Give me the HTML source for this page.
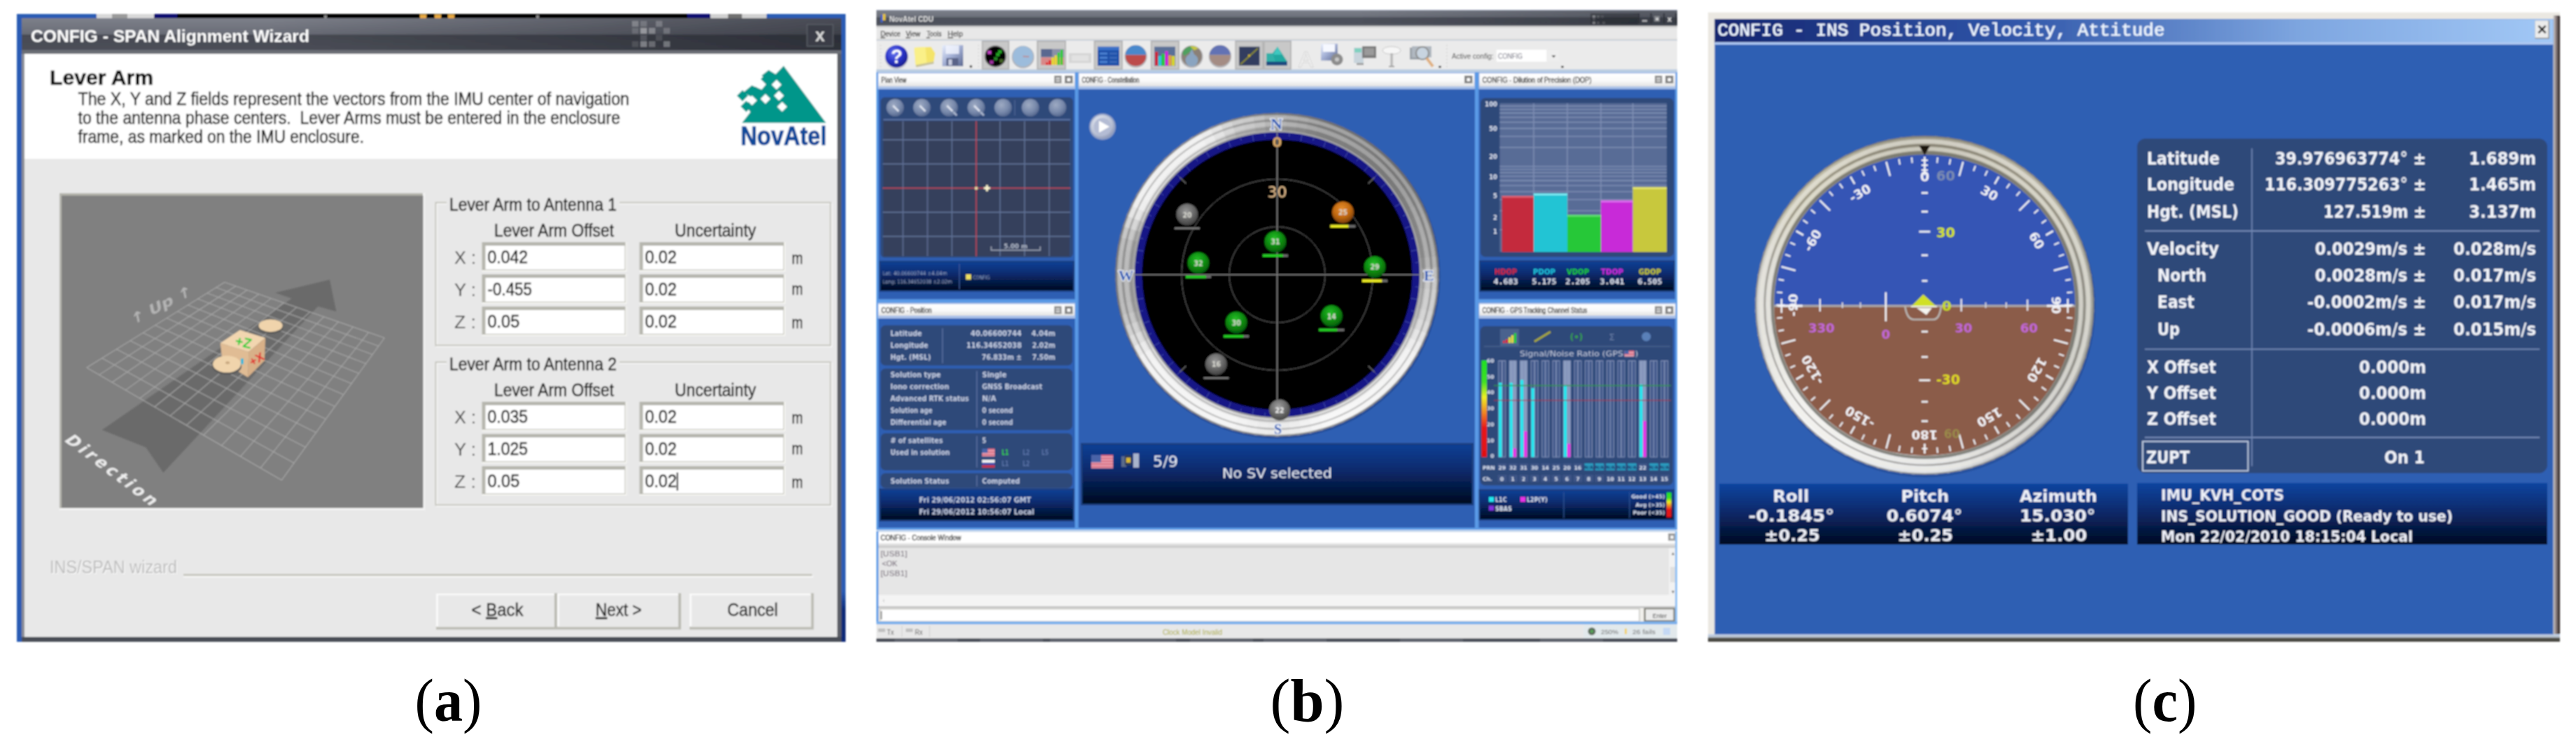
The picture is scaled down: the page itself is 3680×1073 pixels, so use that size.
<!DOCTYPE html>
<html><head><meta charset="utf-8"><title>Figure</title>
<style>html,body{margin:0;padding:0;background:#fff;}svg{display:block}</style></head>
<body><svg width="3680" height="1073" viewBox="0 0 3680 1073">
<defs><filter id="blA" x="-2%" y="-2%" width="104%" height="104%"><feGaussianBlur stdDeviation="0.9"/></filter><filter id="bl2" x="-5%" y="-5%" width="110%" height="110%"><feGaussianBlur stdDeviation="1.6"/></filter><linearGradient id="aRB" x1="0" y1="0" x2="0" y2="1"><stop offset="0" stop-color="#2a5cb4"/><stop offset="0.92" stop-color="#2a5cb4"/><stop offset="0.95" stop-color="#0a2a78"/><stop offset="1" stop-color="#0a2a78"/></linearGradient><linearGradient id="aT1" x1="0" y1="0" x2="0" y2="1"><stop offset="0" stop-color="#7d808a"/><stop offset="0.45" stop-color="#696c76"/><stop offset="0.47" stop-color="#474a53"/><stop offset="0.88" stop-color="#4c4f58"/><stop offset="0.9" stop-color="#6a6d75"/><stop offset="1" stop-color="#6a6d75"/></linearGradient><linearGradient id="aT3" x1="0" y1="0" x2="1" y2="0"><stop offset="0.3" stop-color="#0a0c14" stop-opacity="0"/><stop offset="1" stop-color="#0a0c14" stop-opacity="0.45"/></linearGradient><filter id="blB" x="-2%" y="-2%" width="104%" height="104%"><feGaussianBlur stdDeviation="1.3"/></filter><filter id="blB2" x="-5%" y="-5%" width="110%" height="110%"><feGaussianBlur stdDeviation="0.7"/></filter><linearGradient id="bT" x1="0" y1="0" x2="0" y2="1"><stop offset="0" stop-color="#7c808a"/><stop offset="0.42" stop-color="#6c707a"/><stop offset="0.46" stop-color="#4e525c"/><stop offset="0.85" stop-color="#4c505a"/><stop offset="0.9" stop-color="#5c606a"/><stop offset="1" stop-color="#5c606a"/></linearGradient><linearGradient id="bT2" x1="0" y1="0" x2="1" y2="0"><stop offset="0.6" stop-color="#0a0c14" stop-opacity="0"/><stop offset="0.95" stop-color="#0a0c14" stop-opacity="0.28"/></linearGradient><radialGradient id="bHelp" cx="0.4" cy="0.35" r="0.65"><stop offset="0" stop-color="#6a78f0"/><stop offset="0.6" stop-color="#2a34c8"/><stop offset="1" stop-color="#1a2090"/></radialGradient><linearGradient id="bFl" x1="0" y1="0" x2="1" y2="1"><stop offset="0" stop-color="#e8eefc"/><stop offset="0.45" stop-color="#a8b4d8"/><stop offset="1" stop-color="#5a6890"/></linearGradient><linearGradient id="bH" x1="0" y1="0" x2="0" y2="1"><stop offset="0" stop-color="#ffffff"/><stop offset="0.55" stop-color="#fafafa"/><stop offset="1" stop-color="#e2e2e2"/></linearGradient><linearGradient id="bStrip" x1="0" y1="0" x2="0" y2="1"><stop offset="0" stop-color="#0e3f94"/><stop offset="0.4" stop-color="#0a2c70"/><stop offset="1" stop-color="#010a20"/></linearGradient><radialGradient id="bBall" cx="0.4" cy="0.35" r="0.7"><stop offset="0" stop-color="#e8ecf4"/><stop offset="0.6" stop-color="#a8b4cc"/><stop offset="1" stop-color="#6a7898"/></radialGradient><radialGradient id="bPlay" cx="0.4" cy="0.35" r="0.7"><stop offset="0" stop-color="#f0f2f8"/><stop offset="0.7" stop-color="#b8c0d4"/><stop offset="1" stop-color="#8a94b4"/></radialGradient><linearGradient id="bBez" x1="0.15" y1="0.1" x2="0.85" y2="0.9"><stop offset="0" stop-color="#8a8a8a"/><stop offset="0.15" stop-color="#d8d8d8"/><stop offset="0.3" stop-color="#a8a8a8"/><stop offset="0.5" stop-color="#dcdcdc"/><stop offset="0.7" stop-color="#f4f4f4"/><stop offset="0.9" stop-color="#fafafa"/><stop offset="1" stop-color="#c8c8c8"/></linearGradient><radialGradient id="bs20" cx="0.45" cy="0.35" r="0.7"><stop offset="0" stop-color="#989898"/><stop offset="0.55" stop-color="#666"/><stop offset="1" stop-color="#383838"/></radialGradient><radialGradient id="bs25" cx="0.45" cy="0.35" r="0.7"><stop offset="0" stop-color="#e89030"/><stop offset="0.55" stop-color="#c06810"/><stop offset="1" stop-color="#703804"/></radialGradient><radialGradient id="bs31" cx="0.45" cy="0.35" r="0.7"><stop offset="0" stop-color="#28c028"/><stop offset="0.55" stop-color="#0a8a10"/><stop offset="1" stop-color="#045008"/></radialGradient><radialGradient id="bs32" cx="0.45" cy="0.35" r="0.7"><stop offset="0" stop-color="#28c028"/><stop offset="0.55" stop-color="#0a8a10"/><stop offset="1" stop-color="#045008"/></radialGradient><radialGradient id="bs29" cx="0.45" cy="0.35" r="0.7"><stop offset="0" stop-color="#28c028"/><stop offset="0.55" stop-color="#0a8a10"/><stop offset="1" stop-color="#045008"/></radialGradient><radialGradient id="bs30" cx="0.45" cy="0.35" r="0.7"><stop offset="0" stop-color="#28c028"/><stop offset="0.55" stop-color="#0a8a10"/><stop offset="1" stop-color="#045008"/></radialGradient><radialGradient id="bs14" cx="0.45" cy="0.35" r="0.7"><stop offset="0" stop-color="#28c028"/><stop offset="0.55" stop-color="#0a8a10"/><stop offset="1" stop-color="#045008"/></radialGradient><radialGradient id="bs16" cx="0.45" cy="0.35" r="0.7"><stop offset="0" stop-color="#989898"/><stop offset="0.55" stop-color="#666"/><stop offset="1" stop-color="#383838"/></radialGradient><radialGradient id="bs22" cx="0.45" cy="0.35" r="0.7"><stop offset="0" stop-color="#a0a0a0"/><stop offset="0.55" stop-color="#6a6a6a"/><stop offset="1" stop-color="#3c3c3c"/></radialGradient><linearGradient id="bSc" x1="0" y1="0" x2="0" y2="1"><stop offset="0" stop-color="#20e020"/><stop offset="0.22" stop-color="#40e020"/><stop offset="0.38" stop-color="#f0f020"/><stop offset="0.55" stop-color="#f08020"/><stop offset="0.7" stop-color="#e81818"/><stop offset="1" stop-color="#e01010"/></linearGradient><filter id="blC" x="-2%" y="-2%" width="104%" height="104%"><feGaussianBlur stdDeviation="0.9"/></filter><linearGradient id="cRB" x1="0" y1="0" x2="1" y2="0"><stop offset="0" stop-color="#cfcfcf"/><stop offset="0.45" stop-color="#8a7c7c"/><stop offset="1" stop-color="#1c1616"/></linearGradient><linearGradient id="cBB" x1="0" y1="0" x2="0" y2="1"><stop offset="0" stop-color="#c8d8f0"/><stop offset="0.45" stop-color="#b0b8c0"/><stop offset="0.5" stop-color="#5a5a54"/><stop offset="1" stop-color="#3a3a36"/></linearGradient><linearGradient id="cT" x1="0" y1="0" x2="1" y2="0"><stop offset="0" stop-color="#14256f"/><stop offset="0.35" stop-color="#2f55a8"/><stop offset="0.7" stop-color="#7ea6e0"/><stop offset="1" stop-color="#a2c8f6"/></linearGradient><linearGradient id="cBez" x1="0.3" y1="0" x2="0.6" y2="1"><stop offset="0" stop-color="#a8a494"/><stop offset="0.25" stop-color="#cfcab8"/><stop offset="0.5" stop-color="#c4c2b8"/><stop offset="0.75" stop-color="#eceef2"/><stop offset="1" stop-color="#d0d4dc"/></linearGradient><linearGradient id="cStrip" x1="0" y1="0" x2="0" y2="1"><stop offset="0" stop-color="#1145a0"/><stop offset="0.35" stop-color="#0c3078"/><stop offset="1" stop-color="#020a22"/></linearGradient></defs>
<g id="panelA" filter="url(#blA)">
<rect x="24.0" y="20.0" width="1184.0" height="897.0" fill="#2a5cb4" />
<rect x="1202.0" y="20.0" width="6.0" height="897.0" fill="url(#aRB)" />
<rect x="138.0" y="20.0" width="82.0" height="6.0" fill="#d8d8d8" />
<rect x="160.0" y="20.0" width="22.0" height="6.0" fill="#9a9a9a" />
<rect x="220.0" y="20.0" width="33.0" height="6.0" fill="#101070" />
<rect x="253.0" y="20.0" width="729.0" height="6.0" fill="#000" />
<rect x="982.0" y="20.0" width="33.0" height="6.0" fill="#101070" />
<rect x="1015.0" y="20.0" width="80.0" height="6.0" fill="#d0d0d0" />
<rect x="1040.0" y="20.0" width="20.0" height="6.0" fill="#707070" />
<rect x="600.0" y="21.0" width="9.0" height="5.0" fill="#e8a840" />
<rect x="621.0" y="21.0" width="9.0" height="5.0" fill="#e8a840" />
<rect x="640.0" y="21.0" width="9.0" height="5.0" fill="#e8a840" />
<rect x="463.0" y="22.0" width="4.0" height="4.0" fill="#888" />
<rect x="766.0" y="22.0" width="4.0" height="4.0" fill="#888" />
<rect x="31.0" y="26.0" width="1171.0" height="51.0" fill="url(#aT1)" />
<rect x="31.0" y="26.0" width="1171.0" height="46.0" fill="url(#aT3)" />
<rect x="903.0" y="30.0" width="9.0" height="8.0" fill="#fff" opacity="0.25"/>
<rect x="915.0" y="30.0" width="9.0" height="8.0" fill="#fff" opacity="0.18"/>
<rect x="937.0" y="30.0" width="9.0" height="8.0" fill="#fff" opacity="0.22"/>
<rect x="903.0" y="40.0" width="9.0" height="8.0" fill="#fff" opacity="0.15"/>
<rect x="915.0" y="40.0" width="9.0" height="8.0" fill="#fff" opacity="0.4"/>
<rect x="927.0" y="40.0" width="9.0" height="8.0" fill="#fff" opacity="0.3"/>
<rect x="948.0" y="40.0" width="9.0" height="8.0" fill="#fff" opacity="0.2"/>
<rect x="915.0" y="50.0" width="9.0" height="8.0" fill="#fff" opacity="0.15"/>
<rect x="937.0" y="50.0" width="9.0" height="8.0" fill="#fff" opacity="0.12"/>
<rect x="903.0" y="59.0" width="9.0" height="8.0" fill="#fff" opacity="0.12"/>
<rect x="915.0" y="59.0" width="9.0" height="8.0" fill="#fff" opacity="0.35"/>
<rect x="927.0" y="59.0" width="9.0" height="8.0" fill="#fff" opacity="0.25"/>
<rect x="948.0" y="59.0" width="9.0" height="8.0" fill="#fff" opacity="0.3"/>
<rect x="1153.0" y="35.0" width="37.0" height="31.0" fill="#3a3d46" stroke="#5a5d66" stroke-width="1.5"/>
<text x="1171.5" y="58.5" font-size="25" fill="#d8d8d8" font-family='"Liberation Sans", Arial, sans-serif' font-weight="bold" text-anchor="middle" >x</text>
<text x="44.0" y="60.0" font-size="23.5" fill="#fff" font-family='"Liberation Sans", Arial, sans-serif' font-weight="bold" text-anchor="start" textLength="398.0" lengthAdjust="spacingAndGlyphs" >CONFIG - SPAN Alignment Wizard</text>
<rect x="31.0" y="77.0" width="4.0" height="835.0" fill="#8a8d95" />
<rect x="1196.0" y="77.0" width="6.0" height="835.0" fill="#5a5d66" />
<rect x="31.0" y="910.0" width="1171.0" height="7.0" fill="#4a4d56" />
<rect x="35.0" y="77.0" width="1161.0" height="150.0" fill="#fff" />
<rect x="35.0" y="227.0" width="1161.0" height="683.0" fill="#e8e8e8" />
<text x="71.0" y="121.0" font-size="29.5" fill="#000" font-family='"Liberation Sans", Arial, sans-serif' font-weight="bold" text-anchor="start" textLength="148.0" lengthAdjust="spacingAndGlyphs" stroke="#000" stroke-width="0.5">Lever Arm</text>
<text x="111.5" y="149.5" font-size="25" fill="#1a1a1a" font-family='"Liberation Sans", Arial, sans-serif' font-weight="normal" text-anchor="start" textLength="787.5" lengthAdjust="spacingAndGlyphs"  stroke="#222" stroke-width="0.55">The X, Y and Z fields represent the vectors from the IMU center of navigation</text>
<text x="111.5" y="176.5" font-size="25" fill="#1a1a1a" font-family='"Liberation Sans", Arial, sans-serif' font-weight="normal" text-anchor="start" textLength="774.5" lengthAdjust="spacingAndGlyphs" style="white-space:pre" stroke="#222" stroke-width="0.55">to the antenna phase centers.  Lever Arms must be entered in the enclosure</text>
<text x="111.5" y="203.5" font-size="25" fill="#1a1a1a" font-family='"Liberation Sans", Arial, sans-serif' font-weight="normal" text-anchor="start" textLength="408.5" lengthAdjust="spacingAndGlyphs"  stroke="#222" stroke-width="0.55">frame, as marked on the IMU enclosure.</text>
<polygon points="1119.5,94 1180,175.5 1060,175.5 1072,160 1064,150 1076,140 1062,132 1074,122 1088,128 1098,116 1088,108 1098,100 1108,106" fill="#00968a"/>
<polygon points="1094.7,105 1102.7,113 1094.7,121 1086.7,113" fill="#00968a"/>
<polygon points="1080,124 1088,132 1080,140 1072,132" fill="#00968a"/>
<polygon points="1060.7,128.7 1068.7,136.7 1060.7,144.7 1052.7,136.7" fill="#00968a"/>
<polygon points="1100.3,122 1108.3,130 1100.3,138 1092.3,130" fill="#00968a"/>
<polygon points="1066,144 1074,152 1066,160 1058,152" fill="#00968a"/>
<polygon points="1109.4,114 1116.4,121 1109.4,128 1102.4,121" fill="#fff"/>
<polygon points="1112.8,129.7 1119.8,136.7 1112.8,143.7 1105.8,136.7" fill="#fff"/>
<polygon points="1093.5,134.3 1100.5,141.3 1093.5,148.3 1086.5,141.3" fill="#fff"/>
<polygon points="1074.3,136.5 1081.3,143.5 1074.3,150.5 1067.3,143.5" fill="#fff"/>
<polygon points="1117.3,145.6 1124.3,152.6 1117.3,159.6 1110.3,152.6" fill="#fff"/>
<text x="1058.0" y="207.0" font-size="37" fill="#10489a" font-family='"Liberation Sans", Arial, sans-serif' font-weight="bold" text-anchor="start" textLength="123.0" lengthAdjust="spacingAndGlyphs" stroke="#10489a" stroke-width="0.9">NovAtel</text>
<rect x="85.0" y="276.0" width="522.0" height="453.0" fill="#f4f4f4" />
<rect x="85.0" y="276.0" width="519.0" height="450.0" fill="#b4b4ac" />
<rect x="88.0" y="279.5" width="516.5" height="446.0" fill="#808080" />
<clipPath id="c3d"><rect x="88" y="279.5" width="516.5" height="446"/></clipPath>
<g clip-path="url(#c3d)">
<polygon points="471.1,399.5 480.5,445.2 454.2,437.7 233.3,675.5 208.3,639.2 145.7,614.2 416.7,426.4 392.9,418.3" fill="#6a6a6a"/>
<line x1="123.8" y1="525.3" x2="402.3" y2="686.1" stroke="#a8a8a8" stroke-width="1.1" />
<line x1="123.8" y1="525.3" x2="320.9" y2="403.3" stroke="#a8a8a8" stroke-width="1.1" />
<line x1="145.8" y1="511.7" x2="420.0" y2="661.6" stroke="#a8a8a8" stroke-width="1.1" />
<line x1="141.6" y1="535.6" x2="336.7" y2="408.8" stroke="#a8a8a8" stroke-width="1.1" />
<line x1="166.5" y1="498.9" x2="436.4" y2="639.0" stroke="#a8a8a8" stroke-width="1.1" />
<line x1="160.1" y1="546.3" x2="353.0" y2="414.5" stroke="#a8a8a8" stroke-width="1.1" />
<line x1="185.9" y1="486.8" x2="451.5" y2="618.1" stroke="#a8a8a8" stroke-width="1.1" />
<line x1="179.4" y1="557.4" x2="369.8" y2="420.3" stroke="#a8a8a8" stroke-width="1.1" />
<line x1="204.3" y1="475.5" x2="465.5" y2="598.7" stroke="#a8a8a8" stroke-width="1.1" />
<line x1="199.7" y1="569.1" x2="387.2" y2="426.4" stroke="#a8a8a8" stroke-width="1.1" />
<line x1="221.7" y1="464.7" x2="478.5" y2="580.7" stroke="#a8a8a8" stroke-width="1.1" />
<line x1="220.9" y1="581.3" x2="405.2" y2="432.6" stroke="#a8a8a8" stroke-width="1.1" />
<line x1="238.1" y1="454.5" x2="490.7" y2="563.8" stroke="#a8a8a8" stroke-width="1.1" />
<line x1="243.1" y1="594.2" x2="423.7" y2="439.1" stroke="#a8a8a8" stroke-width="1.1" />
<line x1="253.7" y1="444.9" x2="502.1" y2="548.1" stroke="#a8a8a8" stroke-width="1.1" />
<line x1="266.4" y1="607.6" x2="442.8" y2="445.7" stroke="#a8a8a8" stroke-width="1.1" />
<line x1="268.5" y1="435.7" x2="512.7" y2="533.4" stroke="#a8a8a8" stroke-width="1.1" />
<line x1="290.8" y1="621.7" x2="462.7" y2="452.6" stroke="#a8a8a8" stroke-width="1.1" />
<line x1="282.6" y1="427.0" x2="522.7" y2="519.6" stroke="#a8a8a8" stroke-width="1.1" />
<line x1="316.5" y1="636.6" x2="483.2" y2="459.8" stroke="#a8a8a8" stroke-width="1.1" />
<line x1="296.0" y1="418.7" x2="532.1" y2="506.6" stroke="#a8a8a8" stroke-width="1.1" />
<line x1="343.6" y1="652.2" x2="504.4" y2="467.2" stroke="#a8a8a8" stroke-width="1.1" />
<line x1="308.7" y1="410.8" x2="540.9" y2="494.4" stroke="#a8a8a8" stroke-width="1.1" />
<line x1="372.2" y1="668.7" x2="526.5" y2="474.9" stroke="#a8a8a8" stroke-width="1.1" />
<line x1="320.9" y1="403.3" x2="549.3" y2="482.8" stroke="#a8a8a8" stroke-width="1.1" />
<line x1="402.3" y1="686.1" x2="549.3" y2="482.8" stroke="#a8a8a8" stroke-width="1.1" />
<ellipse cx="386.6" cy="468.2" rx="18" ry="9" fill="#5a5a5a" />
<ellipse cx="386.6" cy="465.2" rx="17" ry="9" fill="#f0d4ac" />
<polygon points="314.7,490.3 342.8,471.5 379.1,482.8 355.3,502.8" fill="#f2d6b0"/>
<polygon points="314.7,490.3 355.3,502.8 354.1,539.1 317.8,517.2" fill="#e0bc94"/>
<polygon points="355.3,502.8 379.1,482.8 377.9,515.3 354.1,539.1" fill="#d8b088"/>
<text x="347.8" y="496.0" font-size="20" fill="#22cc33" font-family='"Liberation Sans", Arial, sans-serif' font-weight="bold" text-anchor="middle" transform="rotate(12 348 489)">+Z</text>
<text x="366.6" y="518.8" font-size="17" fill="#e02a2a" font-family='"Liberation Sans", Arial, sans-serif' font-weight="bold" text-anchor="middle" transform="rotate(-30 367 513)">+X</text>
<rect x="344.0" y="512.3" width="4.0" height="8.0" fill="#30b8d8" />
<ellipse cx="324.1" cy="523.3" rx="21" ry="12" fill="#5a5a5a" />
<ellipse cx="324.1" cy="520.3" rx="20" ry="12" fill="#f0d4ac" />
<ellipse cx="325.1" cy="518.3" rx="3" ry="2" fill="#c8a880" />
<g transform="translate(230.2,435.8) rotate(-27) skewX(-15)">
<text x="0.0" y="7.0" font-size="20" fill="#b4b4b4" font-family='"DejaVu Sans", "Liberation Sans", sans-serif' font-weight="bold" text-anchor="middle" textLength="96.0" lengthAdjust="spacingAndGlyphs" >↑  Up  ↑</text>
</g>
<g transform="translate(90.6,629.2) rotate(37) skewX(-20)">
<text x="0" y="0" font-size="23" fill="#ececec" font-family='"DejaVu Sans", "Liberation Sans", sans-serif' font-weight="bold" textLength="156" lengthAdjust="spacing">Direction</text>
</g>
</g>
<rect x="622.5" y="289.5" width="564" height="204" fill="none" stroke="#fbfbfb" stroke-width="2" transform="translate(1.5,1.5)"/>
<rect x="622.5" y="289.5" width="564" height="204" fill="none" stroke="#c4c4bc" stroke-width="2"/>
<rect x="638.0" y="281.5" width="247.0" height="18.0" fill="#e8e8e8" />
<text x="642.0" y="300.5" font-size="25" fill="#222" font-family='"Liberation Sans", Arial, sans-serif' font-weight="normal" text-anchor="start" textLength="239.0" lengthAdjust="spacingAndGlyphs"  stroke="#222" stroke-width="0.55">Lever Arm to Antenna 1</text>
<text x="706.0" y="338.1" font-size="25" fill="#222" font-family='"Liberation Sans", Arial, sans-serif' font-weight="normal" text-anchor="start" textLength="171.0" lengthAdjust="spacingAndGlyphs"  stroke="#222" stroke-width="0.55">Lever Arm Offset</text>
<text x="964.0" y="338.1" font-size="25" fill="#222" font-family='"Liberation Sans", Arial, sans-serif' font-weight="normal" text-anchor="start" textLength="116.0" lengthAdjust="spacingAndGlyphs"  stroke="#222" stroke-width="0.55">Uncertainty</text>
<text x="649.0" y="377.0" font-size="25" fill="#444" font-family='"Liberation Sans", Arial, sans-serif' font-weight="normal" text-anchor="start" textLength="31.0" lengthAdjust="spacingAndGlyphs" >X :</text>
<rect x="688.5" y="346.0" width="207.0" height="42.0" fill="#f6f6f2" />
<rect x="688.5" y="346.0" width="205.0" height="40.0" fill="#b6b6ae" />
<rect x="693.5" y="351.0" width="199.0" height="34.0" fill="#fff" />
<text x="696.5" y="376.0" font-size="25" fill="#111" font-family='"Liberation Sans", Arial, sans-serif' font-weight="normal" text-anchor="start" textLength="57.5" lengthAdjust="spacingAndGlyphs"  stroke="#222" stroke-width="0.55">0.042</text>
<rect x="913.5" y="346.0" width="208.5" height="42.0" fill="#f6f6f2" />
<rect x="913.5" y="346.0" width="206.5" height="40.0" fill="#b6b6ae" />
<rect x="918.5" y="351.0" width="200.5" height="34.0" fill="#fff" />
<text x="921.5" y="376.0" font-size="25" fill="#111" font-family='"Liberation Sans", Arial, sans-serif' font-weight="normal" text-anchor="start" textLength="45.2" lengthAdjust="spacingAndGlyphs"  stroke="#222" stroke-width="0.55">0.02</text>
<text x="1131.0" y="377.0" font-size="23" fill="#222" font-family='"Liberation Sans", Arial, sans-serif' font-weight="normal" text-anchor="start" textLength="16.0" lengthAdjust="spacingAndGlyphs"  stroke="#222" stroke-width="0.55">m</text>
<text x="649.0" y="423.0" font-size="25" fill="#444" font-family='"Liberation Sans", Arial, sans-serif' font-weight="normal" text-anchor="start" textLength="31.0" lengthAdjust="spacingAndGlyphs" >Y :</text>
<rect x="688.5" y="392.0" width="207.0" height="42.0" fill="#f6f6f2" />
<rect x="688.5" y="392.0" width="205.0" height="40.0" fill="#b6b6ae" />
<rect x="693.5" y="397.0" width="199.0" height="34.0" fill="#fff" />
<text x="696.5" y="422.0" font-size="25" fill="#111" font-family='"Liberation Sans", Arial, sans-serif' font-weight="normal" text-anchor="start" textLength="63.5" lengthAdjust="spacingAndGlyphs"  stroke="#222" stroke-width="0.55">-0.455</text>
<rect x="913.5" y="392.0" width="208.5" height="42.0" fill="#f6f6f2" />
<rect x="913.5" y="392.0" width="206.5" height="40.0" fill="#b6b6ae" />
<rect x="918.5" y="397.0" width="200.5" height="34.0" fill="#fff" />
<text x="921.5" y="422.0" font-size="25" fill="#111" font-family='"Liberation Sans", Arial, sans-serif' font-weight="normal" text-anchor="start" textLength="45.2" lengthAdjust="spacingAndGlyphs"  stroke="#222" stroke-width="0.55">0.02</text>
<text x="1131.0" y="421.0" font-size="23" fill="#222" font-family='"Liberation Sans", Arial, sans-serif' font-weight="normal" text-anchor="start" textLength="16.0" lengthAdjust="spacingAndGlyphs"  stroke="#222" stroke-width="0.55">m</text>
<text x="649.0" y="469.0" font-size="25" fill="#444" font-family='"Liberation Sans", Arial, sans-serif' font-weight="normal" text-anchor="start" textLength="31.0" lengthAdjust="spacingAndGlyphs" >Z :</text>
<rect x="688.5" y="438.0" width="207.0" height="42.0" fill="#f6f6f2" />
<rect x="688.5" y="438.0" width="205.0" height="40.0" fill="#b6b6ae" />
<rect x="693.5" y="443.0" width="199.0" height="34.0" fill="#fff" />
<text x="696.5" y="468.0" font-size="25" fill="#111" font-family='"Liberation Sans", Arial, sans-serif' font-weight="normal" text-anchor="start" textLength="45.7" lengthAdjust="spacingAndGlyphs"  stroke="#222" stroke-width="0.55">0.05</text>
<rect x="913.5" y="438.0" width="208.5" height="42.0" fill="#f6f6f2" />
<rect x="913.5" y="438.0" width="206.5" height="40.0" fill="#b6b6ae" />
<rect x="918.5" y="443.0" width="200.5" height="34.0" fill="#fff" />
<text x="921.5" y="468.0" font-size="25" fill="#111" font-family='"Liberation Sans", Arial, sans-serif' font-weight="normal" text-anchor="start" textLength="45.2" lengthAdjust="spacingAndGlyphs"  stroke="#222" stroke-width="0.55">0.02</text>
<text x="1131.0" y="469.0" font-size="23" fill="#222" font-family='"Liberation Sans", Arial, sans-serif' font-weight="normal" text-anchor="start" textLength="16.0" lengthAdjust="spacingAndGlyphs"  stroke="#222" stroke-width="0.55">m</text>
<rect x="622.5" y="517.5" width="564" height="204" fill="none" stroke="#fbfbfb" stroke-width="2" transform="translate(1.5,1.5)"/>
<rect x="622.5" y="517.5" width="564" height="204" fill="none" stroke="#c4c4bc" stroke-width="2"/>
<rect x="638.0" y="509.5" width="247.0" height="18.0" fill="#e8e8e8" />
<text x="642.0" y="528.5" font-size="25" fill="#222" font-family='"Liberation Sans", Arial, sans-serif' font-weight="normal" text-anchor="start" textLength="239.0" lengthAdjust="spacingAndGlyphs"  stroke="#222" stroke-width="0.55">Lever Arm to Antenna 2</text>
<text x="706.0" y="566.1" font-size="25" fill="#222" font-family='"Liberation Sans", Arial, sans-serif' font-weight="normal" text-anchor="start" textLength="171.0" lengthAdjust="spacingAndGlyphs"  stroke="#222" stroke-width="0.55">Lever Arm Offset</text>
<text x="964.0" y="566.1" font-size="25" fill="#222" font-family='"Liberation Sans", Arial, sans-serif' font-weight="normal" text-anchor="start" textLength="116.0" lengthAdjust="spacingAndGlyphs"  stroke="#222" stroke-width="0.55">Uncertainty</text>
<text x="649.0" y="605.0" font-size="25" fill="#444" font-family='"Liberation Sans", Arial, sans-serif' font-weight="normal" text-anchor="start" textLength="31.0" lengthAdjust="spacingAndGlyphs" >X :</text>
<rect x="688.5" y="574.0" width="207.0" height="42.0" fill="#f6f6f2" />
<rect x="688.5" y="574.0" width="205.0" height="40.0" fill="#b6b6ae" />
<rect x="693.5" y="579.0" width="199.0" height="34.0" fill="#fff" />
<text x="696.5" y="604.0" font-size="25" fill="#111" font-family='"Liberation Sans", Arial, sans-serif' font-weight="normal" text-anchor="start" textLength="57.5" lengthAdjust="spacingAndGlyphs"  stroke="#222" stroke-width="0.55">0.035</text>
<rect x="913.5" y="574.0" width="208.5" height="42.0" fill="#f6f6f2" />
<rect x="913.5" y="574.0" width="206.5" height="40.0" fill="#b6b6ae" />
<rect x="918.5" y="579.0" width="200.5" height="34.0" fill="#fff" />
<text x="921.5" y="604.0" font-size="25" fill="#111" font-family='"Liberation Sans", Arial, sans-serif' font-weight="normal" text-anchor="start" textLength="45.2" lengthAdjust="spacingAndGlyphs"  stroke="#222" stroke-width="0.55">0.02</text>
<text x="1131.0" y="605.0" font-size="23" fill="#222" font-family='"Liberation Sans", Arial, sans-serif' font-weight="normal" text-anchor="start" textLength="16.0" lengthAdjust="spacingAndGlyphs"  stroke="#222" stroke-width="0.55">m</text>
<text x="649.0" y="651.0" font-size="25" fill="#444" font-family='"Liberation Sans", Arial, sans-serif' font-weight="normal" text-anchor="start" textLength="31.0" lengthAdjust="spacingAndGlyphs" >Y :</text>
<rect x="688.5" y="620.0" width="207.0" height="42.0" fill="#f6f6f2" />
<rect x="688.5" y="620.0" width="205.0" height="40.0" fill="#b6b6ae" />
<rect x="693.5" y="625.0" width="199.0" height="34.0" fill="#fff" />
<text x="696.5" y="650.0" font-size="25" fill="#111" font-family='"Liberation Sans", Arial, sans-serif' font-weight="normal" text-anchor="start" textLength="57.5" lengthAdjust="spacingAndGlyphs"  stroke="#222" stroke-width="0.55">1.025</text>
<rect x="913.5" y="620.0" width="208.5" height="42.0" fill="#f6f6f2" />
<rect x="913.5" y="620.0" width="206.5" height="40.0" fill="#b6b6ae" />
<rect x="918.5" y="625.0" width="200.5" height="34.0" fill="#fff" />
<text x="921.5" y="650.0" font-size="25" fill="#111" font-family='"Liberation Sans", Arial, sans-serif' font-weight="normal" text-anchor="start" textLength="45.2" lengthAdjust="spacingAndGlyphs"  stroke="#222" stroke-width="0.55">0.02</text>
<text x="1131.0" y="649.0" font-size="23" fill="#222" font-family='"Liberation Sans", Arial, sans-serif' font-weight="normal" text-anchor="start" textLength="16.0" lengthAdjust="spacingAndGlyphs"  stroke="#222" stroke-width="0.55">m</text>
<text x="649.0" y="697.0" font-size="25" fill="#444" font-family='"Liberation Sans", Arial, sans-serif' font-weight="normal" text-anchor="start" textLength="31.0" lengthAdjust="spacingAndGlyphs" >Z :</text>
<rect x="688.5" y="666.0" width="207.0" height="42.0" fill="#f6f6f2" />
<rect x="688.5" y="666.0" width="205.0" height="40.0" fill="#b6b6ae" />
<rect x="693.5" y="671.0" width="199.0" height="34.0" fill="#fff" />
<text x="696.5" y="696.0" font-size="25" fill="#111" font-family='"Liberation Sans", Arial, sans-serif' font-weight="normal" text-anchor="start" textLength="45.7" lengthAdjust="spacingAndGlyphs"  stroke="#222" stroke-width="0.55">0.05</text>
<rect x="913.5" y="666.0" width="208.5" height="42.0" fill="#f6f6f2" />
<rect x="913.5" y="666.0" width="206.5" height="40.0" fill="#b6b6ae" />
<rect x="918.5" y="671.0" width="200.5" height="34.0" fill="#fff" />
<text x="921.5" y="696.0" font-size="25" fill="#111" font-family='"Liberation Sans", Arial, sans-serif' font-weight="normal" text-anchor="start" textLength="45.2" lengthAdjust="spacingAndGlyphs"  stroke="#222" stroke-width="0.55">0.02</text>
<rect x="966.7" y="675.0" width="2.0" height="26.0" fill="#000" />
<text x="1131.0" y="697.0" font-size="23" fill="#222" font-family='"Liberation Sans", Arial, sans-serif' font-weight="normal" text-anchor="start" textLength="16.0" lengthAdjust="spacingAndGlyphs"  stroke="#222" stroke-width="0.55">m</text>
<text x="72.0" y="820.0" font-size="25" fill="#fff" font-family='"Liberation Sans", Arial, sans-serif' font-weight="normal" text-anchor="start" textLength="182.0" lengthAdjust="spacingAndGlyphs" >INS/SPAN wizard</text>
<text x="71.0" y="819.0" font-size="25" fill="#bcbcbc" font-family='"Liberation Sans", Arial, sans-serif' font-weight="normal" text-anchor="start" textLength="182.0" lengthAdjust="spacingAndGlyphs" >INS/SPAN wizard</text>
<rect x="262.0" y="820.0" width="898.0" height="3.0" fill="#c6c6be" />
<rect x="262.0" y="823.0" width="900.0" height="2.0" fill="#f8f8f8" />
<rect x="623.0" y="847.5" width="173.0" height="52.0" fill="#bcbcb4" />
<rect x="623.0" y="847.5" width="169.0" height="48.0" fill="#fafafa" />
<rect x="626.0" y="850.5" width="166.0" height="45.0" fill="#e8e8e8" />
<text x="673.5" y="880" font-size="25" fill="#222" stroke="#222" stroke-width="0.5" font-family='"Liberation Sans", Arial, sans-serif' textLength="74" lengthAdjust="spacingAndGlyphs">&lt; <tspan text-decoration="underline">B</tspan>ack</text>
<rect x="796.0" y="847.5" width="177.0" height="52.0" fill="#bcbcb4" />
<rect x="796.0" y="847.5" width="173.0" height="48.0" fill="#fafafa" />
<rect x="799.0" y="850.5" width="170.0" height="45.0" fill="#e8e8e8" />
<text x="851" y="880" font-size="25" fill="#222" stroke="#222" stroke-width="0.5" font-family='"Liberation Sans", Arial, sans-serif' textLength="65.5" lengthAdjust="spacingAndGlyphs"><tspan text-decoration="underline">N</tspan>ext &gt;</text>
<rect x="985.0" y="847.5" width="177.5" height="52.0" fill="#bcbcb4" />
<rect x="985.0" y="847.5" width="173.5" height="48.0" fill="#fafafa" />
<rect x="988.0" y="850.5" width="170.5" height="45.0" fill="#e8e8e8" />
<text x="1039" y="880" font-size="25" fill="#222" stroke="#222" stroke-width="0.5" font-family='"Liberation Sans", Arial, sans-serif' textLength="72.5" lengthAdjust="spacingAndGlyphs">Cancel</text>
</g>
<g id="panelB" filter="url(#blB)">
<rect x="1252.0" y="14.7" width="1144.0" height="902.0" fill="#2f5fb3" />
<rect x="1252.0" y="14.7" width="1144.0" height="22.7" fill="url(#bT)" />
<rect x="1252.0" y="14.7" width="1144.0" height="22.7" fill="url(#bT2)" />
<rect x="2272.0" y="19.0" width="68.0" height="16.0" fill="#14161e" opacity="0.35"/>
<rect x="1258.0" y="21.0" width="3.0" height="11.0" fill="#4060c0" />
<rect x="1261.0" y="20.0" width="4.0" height="9.0" fill="#e0c040" />
<text x="1270.5" y="30.5" font-size="10.5" fill="#e4e4e4" font-family='"Liberation Sans", Arial, sans-serif' font-weight="bold" text-anchor="start" textLength="63.0" lengthAdjust="spacingAndGlyphs" >NovAtel CDU</text>
<rect x="2340.0" y="19.0" width="2.2" height="15.0" fill="#2a2d36" opacity="0.8"/>
<rect x="2357.5" y="19.0" width="2.2" height="15.0" fill="#2a2d36" opacity="0.8"/>
<rect x="2376.0" y="19.0" width="2.2" height="15.0" fill="#2a2d36" opacity="0.8"/>
<rect x="2393.0" y="19.0" width="2.2" height="15.0" fill="#2a2d36" opacity="0.8"/>
<rect x="2346.0" y="28.5" width="7.0" height="2.5" fill="#e0e0e0" opacity="0.7"/>
<rect x="2363.0" y="23.0" width="8.0" height="8.0" fill="#d0d0d0" opacity="0.4"/>
<rect x="2365.5" y="25.5" width="3.5" height="3.5" fill="#fff" opacity="0.7"/>
<text x="2385.0" y="30.5" font-size="11" fill="#e8e8e8" font-family='"Liberation Sans", Arial, sans-serif' font-weight="bold" text-anchor="middle" >x</text>
<rect x="2275.0" y="22.0" width="4.0" height="3.5" fill="#fff" opacity="0.35"/>
<rect x="2281.0" y="22.0" width="4.0" height="3.5" fill="#fff" opacity="0.15"/>
<rect x="2275.0" y="26.0" width="4.0" height="3.5" fill="#fff" opacity="0.12"/>
<rect x="2275.0" y="31.0" width="4.0" height="3.5" fill="#fff" opacity="0.35"/>
<rect x="2281.0" y="31.0" width="4.0" height="3.5" fill="#fff" opacity="0.15"/>
<rect x="2289.0" y="31.0" width="4.0" height="3.5" fill="#fff" opacity="0.15"/>
<rect x="2287.0" y="22.0" width="4.0" height="3.5" fill="#fff" opacity="0.1"/>
<rect x="1252.0" y="37.4" width="1144.0" height="19.4" fill="#e8e8e8" />
<rect x="1252.0" y="37.0" width="1144.0" height="2.5" fill="#cfcfcf" />
<rect x="1252.0" y="55.0" width="1144.0" height="2.5" fill="#dededc" />
<text x="1258" y="52.3" font-size="10.5" fill="#333" stroke="#333" stroke-width="0.25" font-family='"Liberation Sans", Arial, sans-serif' textLength="28.5" lengthAdjust="spacingAndGlyphs"><tspan text-decoration="underline">D</tspan>evice</text>
<text x="1294" y="52.3" font-size="10.5" fill="#333" stroke="#333" stroke-width="0.25" font-family='"Liberation Sans", Arial, sans-serif' textLength="20.7" lengthAdjust="spacingAndGlyphs"><tspan text-decoration="underline">V</tspan>iew</text>
<text x="1323.8" y="52.3" font-size="10.5" fill="#333" stroke="#333" stroke-width="0.25" font-family='"Liberation Sans", Arial, sans-serif' textLength="21.2" lengthAdjust="spacingAndGlyphs"><tspan text-decoration="underline">T</tspan>ools</text>
<text x="1354" y="52.3" font-size="10.5" fill="#333" stroke="#333" stroke-width="0.25" font-family='"Liberation Sans", Arial, sans-serif' textLength="21.5" lengthAdjust="spacingAndGlyphs"><tspan text-decoration="underline">H</tspan>elp</text>
<rect x="1252.0" y="57.5" width="1144.0" height="42.3" fill="#ebebeb" />
<rect x="1252.0" y="99.8" width="1144.0" height="3.2" fill="#b9cde2" />
<rect x="1257.0" y="64.0" width="2.0" height="2.0" fill="#d8d8d8" />
<rect x="1257.0" y="69.0" width="2.0" height="2.0" fill="#d8d8d8" />
<rect x="1257.0" y="74.0" width="2.0" height="2.0" fill="#d8d8d8" />
<rect x="1257.0" y="79.0" width="2.0" height="2.0" fill="#d8d8d8" />
<rect x="1257.0" y="84.0" width="2.0" height="2.0" fill="#d8d8d8" />
<rect x="1257.0" y="89.0" width="2.0" height="2.0" fill="#d8d8d8" />
<rect x="1257.0" y="94.0" width="2.0" height="2.0" fill="#d8d8d8" />
<rect x="1397.0" y="64.0" width="2.0" height="2.0" fill="#d8d8d8" />
<rect x="1397.0" y="69.0" width="2.0" height="2.0" fill="#d8d8d8" />
<rect x="1397.0" y="74.0" width="2.0" height="2.0" fill="#d8d8d8" />
<rect x="1397.0" y="79.0" width="2.0" height="2.0" fill="#d8d8d8" />
<rect x="1397.0" y="84.0" width="2.0" height="2.0" fill="#d8d8d8" />
<rect x="1397.0" y="89.0" width="2.0" height="2.0" fill="#d8d8d8" />
<rect x="1397.0" y="94.0" width="2.0" height="2.0" fill="#d8d8d8" />
<rect x="2066.0" y="64.0" width="2.0" height="2.0" fill="#d8d8d8" />
<rect x="2066.0" y="69.0" width="2.0" height="2.0" fill="#d8d8d8" />
<rect x="2066.0" y="74.0" width="2.0" height="2.0" fill="#d8d8d8" />
<rect x="2066.0" y="79.0" width="2.0" height="2.0" fill="#d8d8d8" />
<rect x="2066.0" y="84.0" width="2.0" height="2.0" fill="#d8d8d8" />
<rect x="2066.0" y="89.0" width="2.0" height="2.0" fill="#d8d8d8" />
<rect x="2066.0" y="94.0" width="2.0" height="2.0" fill="#d8d8d8" />
<circle cx="1280.7" cy="82.0" r="17" fill="#b8b8c8" opacity="0.6"/>
<circle cx="1280.7" cy="80.4" r="16" fill="url(#bHelp)" />
<text x="1281.0" y="90.0" font-size="27" fill="#fff" font-family='"Liberation Sans", Arial, sans-serif' font-weight="bold" text-anchor="middle" >?</text>
<polygon points="1306,68 1330,67 1336,76 1334,88 1308,93" fill="#f4e46a"/><polygon points="1306,68 1322,67 1324,90 1308,93" fill="#faf088"/><polygon points="1308,93 1334,88 1334,91 1309,96" fill="#b0a860" opacity="0.6"/>
<rect x="1346.0" y="64.5" width="30.0" height="30.0" fill="url(#bFl)" />
<rect x="1351.0" y="65.0" width="19.0" height="12.0" fill="#f4f6ff" opacity="0.8"/>
<rect x="1352.0" y="83.0" width="17.0" height="11.0" fill="#5a6488" />
<rect x="1355.0" y="85.0" width="5.0" height="8.0" fill="#c8cce0" />
<rect x="1385.5" y="93.5" width="3.0" height="3.0" fill="#222" />
<rect x="1402.5" y="58.0" width="39.5" height="41.6" fill="#b6b6b6" />
<rect x="1404.5" y="60.0" width="35.5" height="37.6" fill="#c8c8c8" />
<circle cx="1422.0" cy="80.4" r="15.5" fill="#6a6a6a" />
<circle cx="1422.0" cy="80.4" r="14" fill="#050505" />
<rect x="1411.0" y="72.4" width="5.0" height="5.0" fill="#c040c0" />
<rect x="1414.0" y="86.4" width="5.0" height="5.0" fill="#a030a0" />
<rect x="1423.0" y="75.4" width="5.0" height="5.0" fill="#20a020" />
<rect x="1426.0" y="71.4" width="5.0" height="5.0" fill="#20a020" />
<rect x="1420.0" y="81.4" width="5.0" height="5.0" fill="#208020" />
<rect x="1428.0" y="84.4" width="5.0" height="5.0" fill="#406020" />
<circle cx="1461.4" cy="81.4" r="16" fill="#b0b4bc" />
<circle cx="1461.4" cy="80.4" r="14.5" fill="#9cbcdc" />
<line x1="1461.4" y1="80.4" x2="1470.0" y2="81.0" stroke="#c08080" stroke-width="1.5" />
<rect x="1481.0" y="58.0" width="42.0" height="41.6" fill="#b6b6b6" />
<rect x="1483.0" y="60.0" width="38.0" height="37.6" fill="#c8c8c8" />
<rect x="1487.0" y="70.0" width="33.0" height="23.0" fill="#8a90a8" />
<rect x="1487.0" y="70.0" width="16.0" height="11.0" fill="#5a6890" />
<rect x="1487.0" y="82.0" width="33.0" height="11.0" fill="#d88888" />
<rect x="1494.0" y="89.0" width="3.2" height="4.0" fill="#e02020" />
<rect x="1498.2" y="86.0" width="3.2" height="7.0" fill="#e02020" />
<rect x="1502.4" y="82.0" width="3.2" height="11.0" fill="#e8e020" />
<rect x="1506.6" y="79.0" width="3.2" height="14.0" fill="#e8e020" />
<rect x="1510.8" y="75.0" width="3.2" height="18.0" fill="#20d020" />
<rect x="1515.0" y="71.0" width="3.2" height="22.0" fill="#20d020" />
<rect x="1527.0" y="76.0" width="32.0" height="14.0" fill="#d6d6d6" />
<rect x="1531.0" y="79.0" width="24.0" height="8.0" fill="#e2e2e2" />
<rect x="1562.6" y="58.0" width="41.4" height="41.6" fill="#b6b6b6" />
<rect x="1564.6" y="60.0" width="37.4" height="37.6" fill="#c8c8c8" />
<rect x="1568.0" y="66.8" width="31.0" height="27.2" fill="#1c50a8" />
<rect x="1568.0" y="66.8" width="31.0" height="5.0" fill="#3a70c8" />
<rect x="1571.0" y="75.0" width="11.0" height="3.0" fill="#4a80d0" />
<rect x="1585.0" y="75.0" width="11.0" height="3.0" fill="#3868b8" />
<rect x="1571.0" y="81.0" width="11.0" height="3.0" fill="#4a80d0" />
<rect x="1585.0" y="81.0" width="11.0" height="3.0" fill="#3868b8" />
<rect x="1571.0" y="87.0" width="11.0" height="3.0" fill="#4a80d0" />
<rect x="1585.0" y="87.0" width="11.0" height="3.0" fill="#3868b8" />
<circle cx="1622.5" cy="80.5" r="16.2" fill="#b4b4b8" />
<clipPath id="hc1622"><circle cx="1622.5" cy="79.5" r="15"/></clipPath>
<g clip-path="url(#hc1622)"><rect x="1607.5" y="64.5" width="30" height="14.0" fill="#4a88cc"/><rect x="1607.5" y="78.5" width="30" height="16.0" fill="#bc4c4c"/></g>
<rect x="1643.8" y="58.0" width="41.2" height="41.6" fill="#b6b6b6" />
<rect x="1645.8" y="60.0" width="37.2" height="37.6" fill="#c8c8c8" />
<rect x="1649.0" y="66.7" width="30.0" height="27.6" fill="#5a7098" />
<rect x="1650.0" y="74.0" width="4.2" height="20.0" fill="#d02030" />
<rect x="1654.8" y="80.0" width="4.2" height="14.0" fill="#20d0e0" />
<rect x="1659.6" y="77.0" width="4.2" height="17.0" fill="#20d030" />
<rect x="1664.4" y="73.0" width="4.2" height="21.0" fill="#d020e0" />
<rect x="1669.2" y="79.0" width="4.2" height="15.0" fill="#e8a040" />
<rect x="1674.0" y="80.0" width="4.2" height="14.0" fill="#d8d820" />
<circle cx="1702.5" cy="81.0" r="16" fill="#b4b4b8" />
<circle cx="1702.5" cy="80.0" r="14.5" fill="#8a8078" />
<path d="M1689,76 A14.5,14.5 0 0 1 1707,66.5 L1703,72 L1692,80 Z" fill="#50a060"/>
<path d="M1700,66 A14.5,14.5 0 0 1 1712,69 L1706,72 Z" fill="#c8c840"/>
<ellipse cx="1702.5" cy="86" rx="9" ry="9" fill="#8aa4c0"/><polygon points="1702.5,70 1708,82 1697,82" fill="#8aa4c0"/>
<circle cx="1742.9" cy="80.5" r="16.2" fill="#b4b4b8" />
<clipPath id="hc1742"><circle cx="1742.9" cy="79.5" r="15"/></clipPath>
<g clip-path="url(#hc1742)"><rect x="1727.9" y="64.5" width="30" height="14.0" fill="#6272b4"/><rect x="1727.9" y="78.5" width="30" height="16.0" fill="#a48c84"/></g>
<rect x="1764.3" y="58.0" width="40.7" height="41.6" fill="#b6b6b6" />
<rect x="1766.3" y="60.0" width="36.7" height="37.6" fill="#c8c8c8" />
<rect x="1770.0" y="66.7" width="29.5" height="27.0" fill="#303c5e" />
<line x1="1772.0" y1="92.0" x2="1797.0" y2="69.0" stroke="#8a8a30" stroke-width="2.2" />
<rect x="1783.0" y="78.0" width="3.0" height="3.0" fill="#c8b020" />
<rect x="1805.0" y="58.0" width="40.0" height="41.6" fill="#b6b6b6" />
<rect x="1807.0" y="60.0" width="36.0" height="37.6" fill="#c8c8c8" />
<rect x="1808.9" y="87.4" width="30.0" height="6.2" fill="#1c4c80" />
<polygon points="1825,66.7 1839,88 1809,88" fill="#20a8a0"/><polygon points="1825,66.7 1831,78 1819,78" fill="#40c8c0"/><polygon points="1809,76 1818,76 1822,88 1809,88" fill="#30b0a8"/>
<text x="1865.5" y="95.5" font-size="31" fill="#fcfcfc" font-family='"Liberation Sans", Arial, sans-serif' font-weight="normal" text-anchor="middle" stroke="#cfcfcf" stroke-width="1">A</text>
<rect x="1887.0" y="62.5" width="24.0" height="24.0" fill="url(#bFl)" />
<rect x="1890.0" y="63.0" width="17.0" height="11.0" fill="#f6f8ff" />
<circle cx="1910.0" cy="85.0" r="8.5" fill="#8c8c8c" />
<circle cx="1910.0" cy="85.0" r="3" fill="#c8c8c8" />
<rect x="1934.0" y="68.0" width="14.0" height="22.0" fill="#c8d4dc" />
<rect x="1935.0" y="69.0" width="10.0" height="6.0" fill="#80d0c0" />
<rect x="1946.0" y="66.0" width="20.0" height="17.0" fill="#7a7a7a" />
<rect x="1949.0" y="69.0" width="14.0" height="10.0" fill="#9a9a9a" />
<rect x="1938.0" y="90.0" width="10.0" height="3.0" fill="#a0a0a0" />
<ellipse cx="1988" cy="72" rx="13" ry="5.5" fill="#f6f6f6" stroke="#c4c4c4" stroke-width="1"/>
<rect x="1986.3" y="76.0" width="3.6" height="19.0" fill="#b8b8b8" />
<rect x="1984.0" y="94.0" width="8.0" height="2.0" fill="#a0a0a0" />
<rect x="2014.0" y="68.0" width="27.0" height="17.0" fill="#9aa0a8" />
<rect x="2017.0" y="66.0" width="28.0" height="16.0" fill="#b0b8c0" />
<circle cx="2032.0" cy="76.0" r="9" fill="#c8d4e0" stroke="#888" stroke-width="2"/>
<line x1="2038.0" y1="83.0" x2="2047.0" y2="95.0" stroke="#e0b080" stroke-width="4" />
<rect x="2055.5" y="94.0" width="3.0" height="3.0" fill="#222" />
<rect x="2230.5" y="94.0" width="3.0" height="3.0" fill="#222" />
<text x="2074.0" y="83.5" font-size="10.5" fill="#444" font-family='"Liberation Sans", Arial, sans-serif' font-weight="normal" text-anchor="start" textLength="59.5" lengthAdjust="spacingAndGlyphs" >Active config:</text>
<rect x="2137.8" y="71.0" width="71.7" height="17.0" fill="#fff" />
<text x="2140.0" y="83.5" font-size="10.5" fill="#667" font-family='"Liberation Sans", Arial, sans-serif' font-weight="normal" text-anchor="start" textLength="35.0" lengthAdjust="spacingAndGlyphs" >CONFIG</text>
<rect x="2211.0" y="72.0" width="16.0" height="15.0" fill="#eee" />
<polygon points="2216.5,79 2222.5,79 2219.5,82.5" fill="#444"/>
<rect x="1252.0" y="103.0" width="3.0" height="651.0" fill="#5a9ae6" />
<rect x="1535.6" y="103.0" width="5.0" height="651.0" fill="#5a9ae6" />
<rect x="2107.0" y="103.0" width="5.5" height="651.0" fill="#5a9ae6" />
<rect x="2393.0" y="103.0" width="3.0" height="651.0" fill="#5a9ae6" />
<rect x="1252.0" y="754.0" width="1144.0" height="3.5" fill="#5a9ae6" />
<rect x="1252.0" y="757.0" width="1144.0" height="2.5" fill="#c8dcf0" />
<rect x="1254.0" y="103.0" width="282.0" height="24.5" fill="#a8c0e8" />
<rect x="1255.0" y="105.0" width="280.0" height="18.5" fill="url(#bH)" />
<text x="1259.0" y="118.0" font-size="10.5" fill="#2a2a2a" font-family='"Liberation Sans", Arial, sans-serif' font-weight="normal" text-anchor="start" textLength="36.0" lengthAdjust="spacingAndGlyphs" stroke="#2a2a2a" stroke-width="0.3">Plan View</text>
<rect x="1521.0" y="108.0" width="11.5" height="11.0" fill="#808080" />
<rect x="1524.5" y="111.5" width="4.5" height="4.5" fill="#fff" />
<rect x="1506.0" y="108.0" width="10.5" height="11.0" fill="#8c8c8c" />
<rect x="1508.5" y="111.0" width="5.5" height="2.0" fill="#ddd" />
<rect x="1508.5" y="114.5" width="5.5" height="2.0" fill="#ddd" />
<rect x="1540.5" y="103.0" width="566.5" height="24.5" fill="#a8c0e8" />
<rect x="1541.5" y="105.0" width="564.5" height="18.5" fill="url(#bH)" />
<text x="1545.5" y="118.0" font-size="10.5" fill="#2a2a2a" font-family='"Liberation Sans", Arial, sans-serif' font-weight="normal" text-anchor="start" textLength="82.0" lengthAdjust="spacingAndGlyphs" stroke="#2a2a2a" stroke-width="0.3">CONFIG - Constellation</text>
<rect x="2092.0" y="108.0" width="11.5" height="11.0" fill="#808080" />
<rect x="2095.5" y="111.5" width="4.5" height="4.5" fill="#fff" />
<rect x="2112.5" y="103.0" width="281.5" height="24.5" fill="#a8c0e8" />
<rect x="2113.5" y="105.0" width="279.5" height="18.5" fill="url(#bH)" />
<text x="2117.5" y="118.0" font-size="10.5" fill="#2a2a2a" font-family='"Liberation Sans", Arial, sans-serif' font-weight="normal" text-anchor="start" textLength="156.0" lengthAdjust="spacingAndGlyphs" stroke="#2a2a2a" stroke-width="0.3">CONFIG - Dilution of Precision (DOP)</text>
<rect x="2379.0" y="108.0" width="11.5" height="11.0" fill="#808080" />
<rect x="2382.5" y="111.5" width="4.5" height="4.5" fill="#fff" />
<rect x="2364.0" y="108.0" width="10.5" height="11.0" fill="#8c8c8c" />
<rect x="2366.5" y="111.0" width="5.5" height="2.0" fill="#ddd" />
<rect x="2366.5" y="114.5" width="5.5" height="2.0" fill="#ddd" />
<rect x="1252.0" y="427.5" width="284.0" height="5.0" fill="#5a9ae6" />
<rect x="1254.0" y="432.5" width="282.0" height="22.5" fill="#a8c0e8" />
<rect x="1255.0" y="434.5" width="280.0" height="16.5" fill="url(#bH)" />
<text x="1259.0" y="446.6" font-size="10.5" fill="#2a2a2a" font-family='"Liberation Sans", Arial, sans-serif' font-weight="normal" text-anchor="start" textLength="72.0" lengthAdjust="spacingAndGlyphs" stroke="#2a2a2a" stroke-width="0.3">CONFIG - Position</text>
<rect x="1521.0" y="437.5" width="11.5" height="11.0" fill="#808080" />
<rect x="1524.5" y="441.0" width="4.5" height="4.5" fill="#fff" />
<rect x="1506.0" y="437.5" width="10.5" height="11.0" fill="#8c8c8c" />
<rect x="1508.5" y="440.5" width="5.5" height="2.0" fill="#ddd" />
<rect x="1508.5" y="444.0" width="5.5" height="2.0" fill="#ddd" />
<rect x="2112.0" y="427.5" width="284.0" height="5.0" fill="#5a9ae6" />
<rect x="2112.5" y="432.5" width="281.5" height="22.5" fill="#a8c0e8" />
<rect x="2113.5" y="434.5" width="279.5" height="16.5" fill="url(#bH)" />
<text x="2117.5" y="446.6" font-size="10.5" fill="#2a2a2a" font-family='"Liberation Sans", Arial, sans-serif' font-weight="normal" text-anchor="start" textLength="150.0" lengthAdjust="spacingAndGlyphs" stroke="#2a2a2a" stroke-width="0.3">CONFIG - GPS Tracking Channel Status</text>
<rect x="2379.0" y="437.5" width="11.5" height="11.0" fill="#808080" />
<rect x="2382.5" y="441.0" width="4.5" height="4.5" fill="#fff" />
<rect x="2364.0" y="437.5" width="10.5" height="11.0" fill="#8c8c8c" />
<rect x="2366.5" y="440.5" width="5.5" height="2.0" fill="#ddd" />
<rect x="2366.5" y="444.0" width="5.5" height="2.0" fill="#ddd" />
<rect x="1258.0" y="139.0" width="275.0" height="229.0" rx="6" fill="#2f4879" />
<circle cx="1278.8" cy="153.8" r="12.5" fill="url(#bBall)" opacity="0.6"/>
<line x1="1275.8" y1="151.0" x2="1283.8" y2="159.0" stroke="#dfe4f0" stroke-width="2.5" />
<circle cx="1317.0" cy="153.8" r="12.5" fill="url(#bBall)" opacity="0.6"/>
<line x1="1314.0" y1="151.0" x2="1322.0" y2="159.0" stroke="#dfe4f0" stroke-width="2.5" />
<circle cx="1355.9" cy="153.8" r="12.5" fill="url(#bBall)" opacity="0.6"/>
<line x1="1352.9" y1="151.0" x2="1360.9" y2="159.0" stroke="#dfe4f0" stroke-width="2.5" />
<line x1="1361.9" y1="160.0" x2="1366.9" y2="165.0" stroke="#a8b4cc" stroke-width="3" />
<circle cx="1394.6" cy="153.8" r="12.5" fill="url(#bBall)" opacity="0.6"/>
<line x1="1391.6" y1="151.0" x2="1399.6" y2="159.0" stroke="#dfe4f0" stroke-width="2.5" />
<line x1="1400.6" y1="160.0" x2="1405.6" y2="165.0" stroke="#a8b4cc" stroke-width="3" />
<circle cx="1433.0" cy="153.8" r="12.5" fill="url(#bBall)" opacity="0.6"/>
<circle cx="1472.0" cy="153.8" r="12.5" fill="url(#bBall)" opacity="0.6"/>
<circle cx="1510.9" cy="153.8" r="12.5" fill="url(#bBall)" opacity="0.6"/>
<line x1="1449.7" y1="143.0" x2="1449.7" y2="165.0" stroke="#4a6090" stroke-width="1.5" />
<line x1="1262.0" y1="171.0" x2="1529.0" y2="171.0" stroke="#5a70a0" stroke-width="2" />
<rect x="1262.0" y="173.0" width="266.0" height="193.0" fill="#343f5b" />
<line x1="1290.0" y1="173.0" x2="1290.0" y2="366.0" stroke="#64759a" stroke-width="1.4" />
<line x1="1325.0" y1="173.0" x2="1325.0" y2="366.0" stroke="#64759a" stroke-width="1.4" />
<line x1="1359.9" y1="173.0" x2="1359.9" y2="366.0" stroke="#64759a" stroke-width="1.4" />
<line x1="1428.6" y1="173.0" x2="1428.6" y2="366.0" stroke="#64759a" stroke-width="1.4" />
<line x1="1463.7" y1="173.0" x2="1463.7" y2="366.0" stroke="#64759a" stroke-width="1.4" />
<line x1="1498.9" y1="173.0" x2="1498.9" y2="366.0" stroke="#64759a" stroke-width="1.4" />
<line x1="1261.0" y1="199.8" x2="1529.0" y2="199.8" stroke="#64759a" stroke-width="1.4" />
<line x1="1261.0" y1="234.3" x2="1529.0" y2="234.3" stroke="#64759a" stroke-width="1.4" />
<line x1="1261.0" y1="303.3" x2="1529.0" y2="303.3" stroke="#64759a" stroke-width="1.4" />
<line x1="1261.0" y1="337.8" x2="1529.0" y2="337.8" stroke="#64759a" stroke-width="1.4" />
<line x1="1394.6" y1="173.0" x2="1394.6" y2="366.0" stroke="#c04858" stroke-width="1.6" />
<line x1="1261.0" y1="268.8" x2="1529.0" y2="268.8" stroke="#c04858" stroke-width="1.6" />
<rect x="1392.6" y="267.0" width="4.0" height="4.0" fill="#e8d8a0" />
<rect x="1405.5" y="267.3" width="9.0" height="3.0" fill="#fff8d0" />
<rect x="1408.5" y="264.3" width="3.0" height="9.0" fill="#fff8d0" />
<path d="M1416,352 V357.5 H1486 V352" fill="none" stroke="#a0a8b8" stroke-width="1.5"/>
<text x="1451.0" y="354.5" font-size="9.5" fill="#b0b8c8" font-family='"DejaVu Sans", "Liberation Sans", sans-serif' font-weight="bold" text-anchor="middle" textLength="34.0" lengthAdjust="spacingAndGlyphs" >5.00 m</text>
<rect x="1256.0" y="372.7" width="279.0" height="44.0" fill="#1c3e7c" />
<rect x="1258.0" y="374.7" width="275.0" height="40.0" fill="url(#bStrip)" />
<line x1="1370.6" y1="377.0" x2="1370.6" y2="413.0" stroke="#3a5a9a" stroke-width="1.2" />
<text x="1261.0" y="393.0" font-size="7.5" fill="#a0acc8" font-family='"DejaVu Sans", "Liberation Sans", sans-serif' font-weight="normal" text-anchor="start" textLength="92.0" lengthAdjust="spacingAndGlyphs" >Lat: 40.06600744 ±4.04m</text>
<text x="1261.0" y="404.5" font-size="7.5" fill="#a0acc8" font-family='"DejaVu Sans", "Liberation Sans", sans-serif' font-weight="normal" text-anchor="start" textLength="99.0" lengthAdjust="spacingAndGlyphs" >Long: 116.34652038 ±2.02m</text>
<rect x="1379.8" y="392.0" width="7.5" height="7.5" fill="#f0e060" />
<text x="1390.0" y="399.0" font-size="7.5" fill="#a0acc8" font-family='"DejaVu Sans", "Liberation Sans", sans-serif' font-weight="normal" text-anchor="start" textLength="24.0" lengthAdjust="spacingAndGlyphs" >CONFIG</text>
<rect x="1258.0" y="464.7" width="274.0" height="57.6" rx="7" fill="#2f4879" />
<line x1="1346.5" y1="469.0" x2="1346.5" y2="519.0" stroke="#5a70a0" stroke-width="1.5" />
<text x="1272.0" y="480.3" font-size="10" fill="#c8d0e4" font-family='"DejaVu Sans", "Liberation Sans", sans-serif' font-weight="bold" text-anchor="start" textLength="45.0" lengthAdjust="spacingAndGlyphs" >Latitude</text>
<text x="1459.5" y="480.3" font-size="10" fill="#c8d0e4" font-family='"DejaVu Sans", "Liberation Sans", sans-serif' font-weight="bold" text-anchor="end" textLength="73.0" lengthAdjust="spacingAndGlyphs" >40.06600744</text>
<text x="1507.5" y="480.3" font-size="10" fill="#c8d0e4" font-family='"DejaVu Sans", "Liberation Sans", sans-serif' font-weight="bold" text-anchor="end" textLength="34.0" lengthAdjust="spacingAndGlyphs" >4.04m</text>
<text x="1272.0" y="497.3" font-size="10" fill="#c8d0e4" font-family='"DejaVu Sans", "Liberation Sans", sans-serif' font-weight="bold" text-anchor="start" textLength="54.0" lengthAdjust="spacingAndGlyphs" >Longitude</text>
<text x="1459.5" y="497.3" font-size="10" fill="#c8d0e4" font-family='"DejaVu Sans", "Liberation Sans", sans-serif' font-weight="bold" text-anchor="end" textLength="79.0" lengthAdjust="spacingAndGlyphs" >116.34652038</text>
<text x="1507.5" y="497.3" font-size="10" fill="#c8d0e4" font-family='"DejaVu Sans", "Liberation Sans", sans-serif' font-weight="bold" text-anchor="end" textLength="33.0" lengthAdjust="spacingAndGlyphs" >2.02m</text>
<text x="1272.0" y="514.3" font-size="10" fill="#c8d0e4" font-family='"DejaVu Sans", "Liberation Sans", sans-serif' font-weight="bold" text-anchor="start" textLength="58.0" lengthAdjust="spacingAndGlyphs" >Hgt. (MSL)</text>
<text x="1459.5" y="514.3" font-size="10" fill="#c8d0e4" font-family='"DejaVu Sans", "Liberation Sans", sans-serif' font-weight="bold" text-anchor="end" textLength="57.0" lengthAdjust="spacingAndGlyphs" >76.833m ±</text>
<text x="1507.5" y="514.3" font-size="10" fill="#c8d0e4" font-family='"DejaVu Sans", "Liberation Sans", sans-serif' font-weight="bold" text-anchor="end" textLength="33.0" lengthAdjust="spacingAndGlyphs" >7.50m</text>
<rect x="1258.0" y="526.5" width="274.0" height="88.0" rx="7" fill="#2f4879" />
<line x1="1395.5" y1="530.0" x2="1395.5" y2="611.0" stroke="#5a70a0" stroke-width="1.5" />
<text x="1272.0" y="538.8" font-size="10" fill="#c8d0e4" font-family='"DejaVu Sans", "Liberation Sans", sans-serif' font-weight="bold" text-anchor="start" textLength="72.0" lengthAdjust="spacingAndGlyphs" >Solution type</text>
<text x="1403.0" y="538.8" font-size="10" fill="#c8d0e4" font-family='"DejaVu Sans", "Liberation Sans", sans-serif' font-weight="bold" text-anchor="start" textLength="35.0" lengthAdjust="spacingAndGlyphs" >Single</text>
<text x="1272.0" y="555.9" font-size="10" fill="#c8d0e4" font-family='"DejaVu Sans", "Liberation Sans", sans-serif' font-weight="bold" text-anchor="start" textLength="84.0" lengthAdjust="spacingAndGlyphs" >Iono correction</text>
<text x="1403.0" y="555.9" font-size="10" fill="#c8d0e4" font-family='"DejaVu Sans", "Liberation Sans", sans-serif' font-weight="bold" text-anchor="start" textLength="86.0" lengthAdjust="spacingAndGlyphs" >GNSS Broadcast</text>
<text x="1272.0" y="573.0" font-size="10" fill="#c8d0e4" font-family='"DejaVu Sans", "Liberation Sans", sans-serif' font-weight="bold" text-anchor="start" textLength="112.0" lengthAdjust="spacingAndGlyphs" >Advanced RTK status</text>
<text x="1403.0" y="573.0" font-size="10" fill="#c8d0e4" font-family='"DejaVu Sans", "Liberation Sans", sans-serif' font-weight="bold" text-anchor="start" textLength="20.0" lengthAdjust="spacingAndGlyphs" >N/A</text>
<text x="1272.0" y="590.1" font-size="10" fill="#c8d0e4" font-family='"DejaVu Sans", "Liberation Sans", sans-serif' font-weight="bold" text-anchor="start" textLength="60.0" lengthAdjust="spacingAndGlyphs" >Solution age</text>
<text x="1403.0" y="590.1" font-size="10" fill="#c8d0e4" font-family='"DejaVu Sans", "Liberation Sans", sans-serif' font-weight="bold" text-anchor="start" textLength="44.0" lengthAdjust="spacingAndGlyphs" >0 second</text>
<text x="1272.0" y="607.2" font-size="10" fill="#c8d0e4" font-family='"DejaVu Sans", "Liberation Sans", sans-serif' font-weight="bold" text-anchor="start" textLength="80.0" lengthAdjust="spacingAndGlyphs" >Differential age</text>
<text x="1403.0" y="607.2" font-size="10" fill="#c8d0e4" font-family='"DejaVu Sans", "Liberation Sans", sans-serif' font-weight="bold" text-anchor="start" textLength="44.0" lengthAdjust="spacingAndGlyphs" >0 second</text>
<rect x="1258.0" y="619.0" width="274.0" height="53.0" rx="7" fill="#2f4879" />
<line x1="1395.5" y1="623.0" x2="1395.5" y2="668.0" stroke="#5a70a0" stroke-width="1.5" />
<text x="1272.0" y="632.8" font-size="10" fill="#c8d0e4" font-family='"DejaVu Sans", "Liberation Sans", sans-serif' font-weight="bold" text-anchor="start" textLength="75.0" lengthAdjust="spacingAndGlyphs" ># of satellites</text>
<text x="1403.0" y="632.8" font-size="10" fill="#c8d0e4" font-family='"DejaVu Sans", "Liberation Sans", sans-serif' font-weight="bold" text-anchor="start" textLength="6.0" lengthAdjust="spacingAndGlyphs" >5</text>
<text x="1272.0" y="649.8" font-size="10" fill="#c8d0e4" font-family='"DejaVu Sans", "Liberation Sans", sans-serif' font-weight="bold" text-anchor="start" textLength="85.0" lengthAdjust="spacingAndGlyphs" >Used in solution</text>
<rect x="1403.0" y="641.0" width="18.0" height="11.0" fill="#e8a0b0" />
<rect x="1403.0" y="641.0" width="18.0" height="2.0" fill="#d86a80" />
<rect x="1403.0" y="645.0" width="18.0" height="2.0" fill="#d86a80" />
<rect x="1403.0" y="649.0" width="18.0" height="2.0" fill="#d86a80" />
<rect x="1403.0" y="641.0" width="8.1" height="6.1" fill="#4a64a8" />
<rect x="1403.0" y="657.0" width="18.0" height="4.0" fill="#f0f0f0" />
<rect x="1403.0" y="661.0" width="18.0" height="3.5" fill="#3a50b0" />
<rect x="1403.0" y="664.5" width="18.0" height="3.5" fill="#c83048" />
<text x="1431.0" y="649.8" font-size="10" fill="#38d048" font-family='"DejaVu Sans", "Liberation Sans", sans-serif' font-weight="bold" text-anchor="start" textLength="10.0" lengthAdjust="spacingAndGlyphs" >L1</text>
<text x="1461.0" y="649.8" font-size="10" fill="#5a74a8" font-family='"DejaVu Sans", "Liberation Sans", sans-serif' font-weight="bold" text-anchor="start" textLength="10.0" lengthAdjust="spacingAndGlyphs" >L2</text>
<text x="1488.0" y="649.8" font-size="10" fill="#5a74a8" font-family='"DejaVu Sans", "Liberation Sans", sans-serif' font-weight="bold" text-anchor="start" textLength="10.0" lengthAdjust="spacingAndGlyphs" >L5</text>
<text x="1431.0" y="665.8" font-size="10" fill="#5a74a8" font-family='"DejaVu Sans", "Liberation Sans", sans-serif' font-weight="bold" text-anchor="start" textLength="10.0" lengthAdjust="spacingAndGlyphs" >L1</text>
<text x="1461.0" y="665.8" font-size="10" fill="#5a74a8" font-family='"DejaVu Sans", "Liberation Sans", sans-serif' font-weight="bold" text-anchor="start" textLength="10.0" lengthAdjust="spacingAndGlyphs" >L2</text>
<rect x="1258.0" y="676.0" width="274.0" height="21.5" rx="7" fill="#2f4879" />
<line x1="1395.5" y1="679.0" x2="1395.5" y2="695.0" stroke="#5a70a0" stroke-width="1.5" />
<text x="1272.0" y="691.0" font-size="10" fill="#c8d0e4" font-family='"DejaVu Sans", "Liberation Sans", sans-serif' font-weight="bold" text-anchor="start" textLength="84.0" lengthAdjust="spacingAndGlyphs" >Solution Status</text>
<text x="1403.0" y="691.0" font-size="10" fill="#c8d0e4" font-family='"DejaVu Sans", "Liberation Sans", sans-serif' font-weight="bold" text-anchor="start" textLength="54.0" lengthAdjust="spacingAndGlyphs" >Computed</text>
<rect x="1256.0" y="698.0" width="278.5" height="47.0" fill="#1c3e7c" />
<rect x="1258.0" y="700.0" width="274.5" height="42.5" fill="url(#bStrip)" />
<text x="1313.0" y="718.3" font-size="10" fill="#c8d0e4" font-family='"DejaVu Sans", "Liberation Sans", sans-serif' font-weight="bold" text-anchor="start" textLength="160.0" lengthAdjust="spacingAndGlyphs" >Fri 29/06/2012 02:56:07 GMT</text>
<text x="1313.0" y="734.5" font-size="10" fill="#c8d0e4" font-family='"DejaVu Sans", "Liberation Sans", sans-serif' font-weight="bold" text-anchor="start" textLength="164.5" lengthAdjust="spacingAndGlyphs" >Fri 29/06/2012 10:56:07 Local</text>
<rect x="1252.0" y="759.5" width="1144.0" height="18.5" fill="#fff" />
<rect x="1252.0" y="776.0" width="1144.0" height="3.0" fill="#e4e4e4" />
<text x="1258.0" y="772.0" font-size="10.5" fill="#2a2a2a" font-family='"Liberation Sans", Arial, sans-serif' font-weight="normal" text-anchor="start" textLength="115.0" lengthAdjust="spacingAndGlyphs" stroke="#2a2a2a" stroke-width="0.3">CONFIG - Console Window</text>
<rect x="2383.0" y="762.0" width="10.5" height="10.5" fill="#9a9a9a" />
<rect x="2386.5" y="765.5" width="4.0" height="4.0" fill="#fff" />
<rect x="1252.0" y="759.0" width="3.0" height="132.0" fill="#5a9ae6" />
<rect x="1255.0" y="779.0" width="1141.0" height="4.0" fill="#cfcfcf" />
<rect x="1255.0" y="783.0" width="1141.0" height="67.0" fill="#e6e6e6" />
<rect x="1255.0" y="850.0" width="1141.0" height="16.0" fill="#f4f4f4" />
<rect x="1255.0" y="866.0" width="1141.0" height="4.0" fill="#c8c8c8" />
<rect x="2384.0" y="783.0" width="12.0" height="67.0" fill="#f2f2f2" />
<text x="2390.0" y="793.0" font-size="8" fill="#666" font-family='"DejaVu Sans", "Liberation Sans", sans-serif' font-weight="normal" text-anchor="middle" >▴</text>
<text x="2390.0" y="848.0" font-size="8" fill="#666" font-family='"DejaVu Sans", "Liberation Sans", sans-serif' font-weight="normal" text-anchor="middle" >▾</text>
<rect x="2386.0" y="810.0" width="8.0" height="22.0" fill="#e0e0e0" />
<text x="1258.0" y="794.5" font-size="11.5" fill="#665a6a" font-family='"Liberation Sans", Arial, sans-serif' font-weight="normal" text-anchor="start" textLength="38.0" lengthAdjust="spacingAndGlyphs" >[USB1]</text>
<text x="1260.0" y="808.5" font-size="11.5" fill="#665a6a" font-family='"Liberation Sans", Arial, sans-serif' font-weight="normal" text-anchor="start" textLength="22.0" lengthAdjust="spacingAndGlyphs" >&lt;OK</text>
<text x="1258.0" y="822.5" font-size="11.5" fill="#665a6a" font-family='"Liberation Sans", Arial, sans-serif' font-weight="normal" text-anchor="start" textLength="38.0" lengthAdjust="spacingAndGlyphs" >[USB1]</text>
<text x="1261.0" y="861.0" font-size="9" fill="#aaa" font-family='"Liberation Sans", Arial, sans-serif' font-weight="normal" text-anchor="start" >‹</text>
<rect x="1255.0" y="869.0" width="1141.0" height="20.0" fill="#f2f0ec" />
<rect x="1257.0" y="870.0" width="1085.0" height="18.0" fill="#fff" stroke="#c8c8c4" stroke-width="1.5"/>
<rect x="1258.5" y="873.0" width="1.3" height="12.0" fill="#444" />
<rect x="2348.5" y="868.5" width="44.5" height="20.0" fill="#7e7e76" />
<rect x="2351.0" y="870.5" width="39.5" height="15.5" fill="#ececec" />
<text x="2371.0" y="882.5" font-size="9.5" fill="#333" font-family='"Liberation Sans", Arial, sans-serif' font-weight="normal" text-anchor="middle" textLength="20.0" lengthAdjust="spacingAndGlyphs" >Enter</text>
<rect x="2393.0" y="759.0" width="3.0" height="133.0" fill="#8ec0f4" />
<rect x="1252.0" y="888.0" width="1144.0" height="4.0" fill="#7ab0ec" />
<rect x="1252.0" y="892.0" width="1144.0" height="20.5" fill="#e8e8e8" />
<rect x="1252.0" y="912.0" width="1144.0" height="5.0" fill="#4a4e58" />
<rect x="1278.0" y="912.0" width="90.0" height="5.0" fill="#5c606a" />
<rect x="1400.0" y="912.0" width="90.0" height="5.0" fill="#5c606a" />
<rect x="1500.0" y="912.0" width="90.0" height="5.0" fill="#5c606a" />
<rect x="1590.0" y="912.0" width="90.0" height="5.0" fill="#5c606a" />
<rect x="1700.0" y="912.0" width="90.0" height="5.0" fill="#5c606a" />
<rect x="1805.0" y="912.0" width="90.0" height="5.0" fill="#5c606a" />
<rect x="2000.0" y="912.0" width="90.0" height="5.0" fill="#5c606a" />
<rect x="2200.0" y="912.0" width="90.0" height="5.0" fill="#5c606a" />
<rect x="1254.5" y="898.0" width="10.0" height="5.0" fill="#c0c0c0" />
<text x="1267.0" y="906.5" font-size="10" fill="#555" font-family='"Liberation Sans", Arial, sans-serif' font-weight="normal" text-anchor="start" textLength="10.0" lengthAdjust="spacingAndGlyphs" >Tx</text>
<rect x="1294.0" y="898.0" width="10.0" height="5.0" fill="#c0c0c0" />
<text x="1307.0" y="906.5" font-size="10" fill="#555" font-family='"Liberation Sans", Arial, sans-serif' font-weight="normal" text-anchor="start" textLength="11.0" lengthAdjust="spacingAndGlyphs" >Rx</text>
<line x1="1288.5" y1="894.0" x2="1288.5" y2="910.0" stroke="#d0d0d0" stroke-width="1.2" />
<line x1="1328.0" y1="894.0" x2="1328.0" y2="910.0" stroke="#d0d0d0" stroke-width="1.2" />
<text x="1661.0" y="906.5" font-size="10.5" fill="#a8a838" font-family='"Liberation Sans", Arial, sans-serif' font-weight="normal" text-anchor="start" textLength="85.0" lengthAdjust="spacingAndGlyphs" >Clock Model Invalid</text>
<rect x="2262.0" y="892.5" width="134.0" height="19.5" fill="#e2e9ec" />
<circle cx="2274.0" cy="902.0" r="5.5" fill="#5c6c5c" />
<circle cx="2274.0" cy="902.0" r="2" fill="#50b050" />
<text x="2287.0" y="906.0" font-size="9.5" fill="#666" font-family='"Liberation Sans", Arial, sans-serif' font-weight="normal" text-anchor="start" textLength="25.0" lengthAdjust="spacingAndGlyphs" >250%</text>
<rect x="2321.0" y="898.0" width="3.0" height="8.0" fill="#f0d060" />
<text x="2332.0" y="906.0" font-size="9.5" fill="#666" font-family='"Liberation Sans", Arial, sans-serif' font-weight="normal" text-anchor="start" textLength="33.0" lengthAdjust="spacingAndGlyphs" >26 fails</text>
<rect x="2376.0" y="897.0" width="10.0" height="10.0" fill="#c4d8f4" />
<circle cx="1575.0" cy="181.0" r="19" fill="#8a9cc4" />
<circle cx="1575.0" cy="181.0" r="17" fill="url(#bPlay)" />
<circle cx="1575.0" cy="181.0" r="12.5" fill="#b4bcd4" />
<polygon points="1570,172.5 1570,189.5 1585,181" fill="#fff"/>
<circle cx="1825.5" cy="394.5" r="232" fill="#1a3a7a" opacity="0.5"/>
<polygon points="1822.1,161.5 1843.0,162.2 1840.9,189.2 1822.4,188.5" fill="#959595"/>
<polygon points="1838.2,161.9 1859.0,164.1 1855.0,190.8 1836.6,188.9" fill="#909090"/>
<polygon points="1854.3,163.4 1874.9,167.1 1869.0,193.4 1850.8,190.2" fill="#8a8a8a"/>
<polygon points="1870.2,166.1 1890.5,171.1 1882.8,197.0 1864.8,192.5" fill="#838383"/>
<polygon points="1885.8,169.8 1905.8,176.3 1896.3,201.5 1878.7,195.8" fill="#7e7e7e"/>
<polygon points="1901.2,174.6 1920.7,182.5 1909.4,207.0 1892.3,200.1" fill="#7d7d7d"/>
<polygon points="1916.2,180.5 1935.1,189.7 1922.2,213.4 1905.5,205.3" fill="#7d7d7d"/>
<polygon points="1930.8,187.4 1949.0,197.9 1934.4,220.6 1918.4,211.4" fill="#7b7b7b"/>
<polygon points="1944.9,195.3 1962.2,207.0 1946.1,228.7 1930.8,218.4" fill="#7a7a7a"/>
<polygon points="1958.3,204.2 1974.8,217.1 1957.3,237.6 1942.7,226.2" fill="#787878"/>
<polygon points="1971.1,214.0 1986.7,228.0 1967.7,247.2 1954.0,234.9" fill="#777777"/>
<polygon points="1983.2,224.7 1997.8,239.7 1977.5,257.6 1964.7,244.3" fill="#767676"/>
<polygon points="1994.5,236.1 2008.0,252.2 1986.6,268.6 1974.7,254.4" fill="#767676"/>
<polygon points="2005.0,248.4 2017.3,265.3 1994.8,280.2 1983.9,265.2" fill="#777777"/>
<polygon points="2014.6,261.3 2025.8,279.1 2002.2,292.4 1992.4,276.7" fill="#797979"/>
<polygon points="2023.3,274.9 2033.2,293.4 2008.8,305.0 2000.1,288.7" fill="#7d7d7d"/>
<polygon points="2031.0,289.1 2039.6,308.2 2014.4,318.1 2006.9,301.2" fill="#828282"/>
<polygon points="2037.8,303.7 2044.9,323.4 2019.2,331.5 2012.8,314.1" fill="#868686"/>
<polygon points="2043.4,318.8 2049.2,339.0 2022.9,345.2 2017.8,327.4" fill="#898989"/>
<polygon points="2048.0,334.3 2052.4,354.8 2025.8,359.2 2021.9,341.1" fill="#8b8b8b"/>
<polygon points="2051.6,350.0 2054.5,370.8 2027.6,373.3 2025.0,355.0" fill="#8d8d8d"/>
<polygon points="2054.0,365.9 2055.4,386.9 2028.4,387.5 2027.1,369.1" fill="#969696"/>
<polygon points="2055.3,382.0 2055.3,403.0 2028.3,401.8 2028.3,383.2" fill="#a5a5a5"/>
<polygon points="2055.4,398.1 2054.0,419.1 2027.1,415.9 2028.4,397.5" fill="#b3b3b3"/>
<polygon points="2054.5,414.2 2051.6,435.0 2025.0,430.0 2027.6,411.7" fill="#bcbcbc"/>
<polygon points="2052.4,430.2 2048.0,450.7 2021.9,443.9 2025.8,425.8" fill="#bebebe"/>
<polygon points="2049.2,446.0 2043.4,466.2 2017.8,457.6 2022.9,439.8" fill="#c5c5c5"/>
<polygon points="2044.9,461.6 2037.8,481.3 2012.8,470.9 2019.2,453.5" fill="#cfcfcf"/>
<polygon points="2039.6,476.8 2031.0,495.9 2006.9,483.8 2014.4,466.9" fill="#dbdbdb"/>
<polygon points="2033.2,491.6 2023.3,510.1 2000.1,496.3 2008.8,480.0" fill="#e6e6e6"/>
<polygon points="2025.8,505.9 2014.6,523.7 1992.4,508.3 2002.2,492.6" fill="#eeeeee"/>
<polygon points="2017.3,519.7 2005.0,536.6 1983.9,519.8 1994.8,504.8" fill="#f0f0f0"/>
<polygon points="2008.0,532.8 1994.5,548.9 1974.7,530.6 1986.6,516.4" fill="#f0f0f0"/>
<polygon points="1997.8,545.3 1983.2,560.3 1964.7,540.7 1977.5,527.4" fill="#f0f0f0"/>
<polygon points="1986.7,557.0 1971.1,571.0 1954.0,550.1 1967.7,537.8" fill="#f1f1f1"/>
<polygon points="1974.8,567.9 1958.3,580.8 1942.7,558.8 1957.3,547.4" fill="#f2f2f2"/>
<polygon points="1962.2,578.0 1944.9,589.7 1930.8,566.6 1946.1,556.3" fill="#f3f3f3"/>
<polygon points="1949.0,587.1 1930.8,597.6 1918.4,573.6 1934.4,564.4" fill="#f4f4f4"/>
<polygon points="1935.1,595.3 1916.2,604.5 1905.5,579.7 1922.2,571.6" fill="#f5f5f5"/>
<polygon points="1920.7,602.5 1901.2,610.4 1892.3,584.9 1909.4,578.0" fill="#f5f5f5"/>
<polygon points="1905.8,608.7 1885.8,615.2 1878.7,589.2 1896.3,583.5" fill="#f5f5f5"/>
<polygon points="1890.5,613.9 1870.2,618.9 1864.8,592.5 1882.8,588.0" fill="#f1f1f1"/>
<polygon points="1874.9,617.9 1854.3,621.6 1850.8,594.8 1869.0,591.6" fill="#ececec"/>
<polygon points="1859.0,620.9 1838.2,623.1 1836.6,596.1 1855.0,594.2" fill="#e6e6e6"/>
<polygon points="1843.0,622.8 1822.1,623.5 1822.4,596.5 1840.9,595.8" fill="#e2e2e2"/>
<polygon points="1826.9,623.5 1806.0,622.8 1808.1,595.8 1826.6,596.5" fill="#e2e2e2"/>
<polygon points="1810.8,623.1 1790.0,620.9 1794.0,594.2 1812.4,596.1" fill="#e5e5e5"/>
<polygon points="1794.7,621.6 1774.1,617.9 1780.0,591.6 1798.2,594.8" fill="#eaeaea"/>
<polygon points="1778.8,618.9 1758.5,613.9 1766.2,588.0 1784.2,592.5" fill="#eeeeee"/>
<polygon points="1763.2,615.2 1743.2,608.7 1752.7,583.5 1770.3,589.2" fill="#f1f1f1"/>
<polygon points="1747.8,610.4 1728.3,602.5 1739.6,578.0 1756.7,584.9" fill="#f1f1f1"/>
<polygon points="1732.8,604.5 1713.9,595.3 1726.8,571.6 1743.5,579.7" fill="#f1f1f1"/>
<polygon points="1718.2,597.6 1700.0,587.1 1714.6,564.4 1730.6,573.6" fill="#f1f1f1"/>
<polygon points="1704.1,589.7 1686.8,578.0 1702.9,556.3 1718.2,566.6" fill="#f1f1f1"/>
<polygon points="1690.7,580.8 1674.2,567.9 1691.7,547.4 1706.3,558.8" fill="#f0f0f0"/>
<polygon points="1677.9,571.0 1662.3,557.0 1681.3,537.8 1695.0,550.1" fill="#f0f0f0"/>
<polygon points="1665.8,560.3 1651.2,545.3 1671.5,527.4 1684.3,540.7" fill="#f0f0f0"/>
<polygon points="1654.5,548.9 1641.0,532.8 1662.4,516.4 1674.3,530.6" fill="#f0f0f0"/>
<polygon points="1644.0,536.6 1631.7,519.7 1654.2,504.8 1665.1,519.8" fill="#f0f0f0"/>
<polygon points="1634.4,523.7 1623.2,505.9 1646.8,492.6 1656.6,508.3" fill="#ededed"/>
<polygon points="1625.7,510.1 1615.8,491.6 1640.2,480.0 1648.9,496.3" fill="#e2e2e2"/>
<polygon points="1618.0,495.9 1609.4,476.8 1634.6,466.9 1642.1,483.8" fill="#d2d2d2"/>
<polygon points="1611.2,481.3 1604.1,461.6 1629.8,453.5 1636.2,470.9" fill="#c1c1c1"/>
<polygon points="1605.6,466.2 1599.8,446.0 1626.1,439.8 1631.2,457.6" fill="#b0b0b0"/>
<polygon points="1601.0,450.7 1596.6,430.2 1623.2,425.8 1627.1,443.9" fill="#a4a4a4"/>
<polygon points="1597.4,435.0 1594.5,414.2 1621.4,411.7 1624.0,430.0" fill="#a0a0a0"/>
<polygon points="1595.0,419.1 1593.6,398.1 1620.6,397.5 1621.9,415.9" fill="#a0a0a0"/>
<polygon points="1593.7,403.0 1593.7,382.0 1620.7,383.2 1620.7,401.8" fill="#a0a0a0"/>
<polygon points="1593.6,386.9 1595.0,365.9 1621.9,369.1 1620.6,387.5" fill="#a0a0a0"/>
<polygon points="1594.5,370.8 1597.4,350.0 1624.0,355.0 1621.4,373.3" fill="#a0a0a0"/>
<polygon points="1596.6,354.8 1601.0,334.3 1627.1,341.1 1623.2,359.2" fill="#a2a2a2"/>
<polygon points="1599.8,339.0 1605.6,318.8 1631.2,327.4 1626.1,345.2" fill="#b0b0b0"/>
<polygon points="1604.1,323.4 1611.2,303.7 1636.2,314.1 1629.8,331.5" fill="#c6c6c6"/>
<polygon points="1609.4,308.2 1618.0,289.1 1642.1,301.2 1634.6,318.1" fill="#dbdbdb"/>
<polygon points="1615.8,293.4 1625.7,274.9 1648.9,288.7 1640.2,305.0" fill="#e9e9e9"/>
<polygon points="1623.2,279.1 1634.4,261.3 1656.6,276.7 1646.8,292.4" fill="#ececec"/>
<polygon points="1631.7,265.3 1644.0,248.4 1665.1,265.2 1654.2,280.2" fill="#ececec"/>
<polygon points="1641.0,252.2 1654.5,236.1 1674.3,254.4 1662.4,268.6" fill="#ececec"/>
<polygon points="1651.2,239.7 1665.8,224.7 1684.3,244.3 1671.5,257.6" fill="#ececec"/>
<polygon points="1662.3,228.0 1677.9,214.0 1695.0,234.9 1681.3,247.2" fill="#ececec"/>
<polygon points="1674.2,217.1 1690.7,204.2 1706.3,226.2 1691.7,237.6" fill="#ececec"/>
<polygon points="1686.8,207.0 1704.1,195.3 1718.2,218.4 1702.9,228.7" fill="#ececec"/>
<polygon points="1700.0,197.9 1718.2,187.4 1730.6,211.4 1714.6,220.6" fill="#ececec"/>
<polygon points="1713.9,189.7 1732.8,180.5 1743.5,205.3 1726.8,213.4" fill="#e6e6e6"/>
<polygon points="1728.3,182.5 1747.8,174.6 1756.7,200.1 1739.6,207.0" fill="#d8d8d8"/>
<polygon points="1743.2,176.3 1763.2,169.8 1770.3,195.8 1752.7,201.5" fill="#c7c7c7"/>
<polygon points="1758.5,171.1 1778.8,166.1 1784.2,192.5 1766.2,197.0" fill="#b9b9b9"/>
<polygon points="1774.1,167.1 1794.7,163.4 1798.2,190.2 1780.0,193.4" fill="#b4b4b4"/>
<polygon points="1790.0,164.1 1810.8,161.9 1812.4,188.9 1794.0,190.8" fill="#a9a9a9"/>
<polygon points="1806.0,162.2 1826.9,161.5 1826.6,188.5 1808.1,189.2" fill="#999999"/>
<circle cx="1824.5" cy="392.5" r="230" fill="none" stroke="#6a6a6a" stroke-width="2.2" opacity="0.75"/>
<circle cx="1824.5" cy="392.5" r="225" fill="none" stroke="#ffffff" stroke-width="5" opacity="0.3"/>
<circle cx="1824.5" cy="392.5" r="220.5" fill="none" stroke="#7a7a7a" stroke-width="1.6" opacity="0.55"/>
<circle cx="1824.5" cy="392.5" r="215.5" fill="none" stroke="#ffffff" stroke-width="6" opacity="0.3"/>
<circle cx="1824.5" cy="392.5" r="209" fill="none" stroke="#808080" stroke-width="3" opacity="0.45"/>
<circle cx="1824.5" cy="392.5" r="206" fill="#a4a4a4" />
<circle cx="1824.5" cy="392.5" r="203.5" fill="#161686" />
<circle cx="1824.5" cy="392.5" r="193" fill="#000" />
<line x1="1824.5" y1="198.5" x2="1824.5" y2="189.5" stroke="#4650a8" stroke-width="1.0" />
<line x1="1841.8" y1="195.3" x2="1842.2" y2="190.3" stroke="#4650a8" stroke-width="1.0" />
<line x1="1858.2" y1="201.4" x2="1859.8" y2="192.6" stroke="#4650a8" stroke-width="1.0" />
<line x1="1875.7" y1="201.2" x2="1877.0" y2="196.4" stroke="#4650a8" stroke-width="1.0" />
<line x1="1890.9" y1="210.2" x2="1893.9" y2="201.7" stroke="#4650a8" stroke-width="1.0" />
<line x1="1908.2" y1="213.1" x2="1910.3" y2="208.5" stroke="#4650a8" stroke-width="1.0" />
<line x1="1921.5" y1="224.5" x2="1926.0" y2="216.7" stroke="#4650a8" stroke-width="1.0" />
<line x1="1938.1" y1="230.3" x2="1940.9" y2="226.2" stroke="#4650a8" stroke-width="1.0" />
<line x1="1949.2" y1="243.9" x2="1955.0" y2="237.0" stroke="#4650a8" stroke-width="1.0" />
<line x1="1964.5" y1="252.5" x2="1968.0" y2="249.0" stroke="#4650a8" stroke-width="1.0" />
<line x1="1973.1" y1="267.8" x2="1980.0" y2="262.0" stroke="#4650a8" stroke-width="1.0" />
<line x1="1986.7" y1="278.9" x2="1990.8" y2="276.1" stroke="#4650a8" stroke-width="1.0" />
<line x1="1992.5" y1="295.5" x2="2000.3" y2="291.0" stroke="#4650a8" stroke-width="1.0" />
<line x1="2003.9" y1="308.8" x2="2008.5" y2="306.7" stroke="#4650a8" stroke-width="1.0" />
<line x1="2006.8" y1="326.1" x2="2015.3" y2="323.1" stroke="#4650a8" stroke-width="1.0" />
<line x1="2015.8" y1="341.3" x2="2020.6" y2="340.0" stroke="#4650a8" stroke-width="1.0" />
<line x1="2015.6" y1="358.8" x2="2024.4" y2="357.2" stroke="#4650a8" stroke-width="1.0" />
<line x1="2021.7" y1="375.2" x2="2026.7" y2="374.8" stroke="#4650a8" stroke-width="1.0" />
<line x1="2018.5" y1="392.5" x2="2027.5" y2="392.5" stroke="#4650a8" stroke-width="1.0" />
<line x1="2021.7" y1="409.8" x2="2026.7" y2="410.2" stroke="#4650a8" stroke-width="1.0" />
<line x1="2015.6" y1="426.2" x2="2024.4" y2="427.8" stroke="#4650a8" stroke-width="1.0" />
<line x1="2015.8" y1="443.7" x2="2020.6" y2="445.0" stroke="#4650a8" stroke-width="1.0" />
<line x1="2006.8" y1="458.9" x2="2015.3" y2="461.9" stroke="#4650a8" stroke-width="1.0" />
<line x1="2003.9" y1="476.2" x2="2008.5" y2="478.3" stroke="#4650a8" stroke-width="1.0" />
<line x1="1992.5" y1="489.5" x2="2000.3" y2="494.0" stroke="#4650a8" stroke-width="1.0" />
<line x1="1986.7" y1="506.1" x2="1990.8" y2="508.9" stroke="#4650a8" stroke-width="1.0" />
<line x1="1973.1" y1="517.2" x2="1980.0" y2="523.0" stroke="#4650a8" stroke-width="1.0" />
<line x1="1964.5" y1="532.5" x2="1968.0" y2="536.0" stroke="#4650a8" stroke-width="1.0" />
<line x1="1949.2" y1="541.1" x2="1955.0" y2="548.0" stroke="#4650a8" stroke-width="1.0" />
<line x1="1938.1" y1="554.7" x2="1940.9" y2="558.8" stroke="#4650a8" stroke-width="1.0" />
<line x1="1921.5" y1="560.5" x2="1926.0" y2="568.3" stroke="#4650a8" stroke-width="1.0" />
<line x1="1908.2" y1="571.9" x2="1910.3" y2="576.5" stroke="#4650a8" stroke-width="1.0" />
<line x1="1890.9" y1="574.8" x2="1893.9" y2="583.3" stroke="#4650a8" stroke-width="1.0" />
<line x1="1875.7" y1="583.8" x2="1877.0" y2="588.6" stroke="#4650a8" stroke-width="1.0" />
<line x1="1858.2" y1="583.6" x2="1859.8" y2="592.4" stroke="#4650a8" stroke-width="1.0" />
<line x1="1841.8" y1="589.7" x2="1842.2" y2="594.7" stroke="#4650a8" stroke-width="1.0" />
<line x1="1824.5" y1="586.5" x2="1824.5" y2="595.5" stroke="#4650a8" stroke-width="1.0" />
<line x1="1807.2" y1="589.7" x2="1806.8" y2="594.7" stroke="#4650a8" stroke-width="1.0" />
<line x1="1790.8" y1="583.6" x2="1789.2" y2="592.4" stroke="#4650a8" stroke-width="1.0" />
<line x1="1773.3" y1="583.8" x2="1772.0" y2="588.6" stroke="#4650a8" stroke-width="1.0" />
<line x1="1758.1" y1="574.8" x2="1755.1" y2="583.3" stroke="#4650a8" stroke-width="1.0" />
<line x1="1740.8" y1="571.9" x2="1738.7" y2="576.5" stroke="#4650a8" stroke-width="1.0" />
<line x1="1727.5" y1="560.5" x2="1723.0" y2="568.3" stroke="#4650a8" stroke-width="1.0" />
<line x1="1710.9" y1="554.7" x2="1708.1" y2="558.8" stroke="#4650a8" stroke-width="1.0" />
<line x1="1699.8" y1="541.1" x2="1694.0" y2="548.0" stroke="#4650a8" stroke-width="1.0" />
<line x1="1684.5" y1="532.5" x2="1681.0" y2="536.0" stroke="#4650a8" stroke-width="1.0" />
<line x1="1675.9" y1="517.2" x2="1669.0" y2="523.0" stroke="#4650a8" stroke-width="1.0" />
<line x1="1662.3" y1="506.1" x2="1658.2" y2="508.9" stroke="#4650a8" stroke-width="1.0" />
<line x1="1656.5" y1="489.5" x2="1648.7" y2="494.0" stroke="#4650a8" stroke-width="1.0" />
<line x1="1645.1" y1="476.2" x2="1640.5" y2="478.3" stroke="#4650a8" stroke-width="1.0" />
<line x1="1642.2" y1="458.9" x2="1633.7" y2="461.9" stroke="#4650a8" stroke-width="1.0" />
<line x1="1633.2" y1="443.7" x2="1628.4" y2="445.0" stroke="#4650a8" stroke-width="1.0" />
<line x1="1633.4" y1="426.2" x2="1624.6" y2="427.8" stroke="#4650a8" stroke-width="1.0" />
<line x1="1627.3" y1="409.8" x2="1622.3" y2="410.2" stroke="#4650a8" stroke-width="1.0" />
<line x1="1630.5" y1="392.5" x2="1621.5" y2="392.5" stroke="#4650a8" stroke-width="1.0" />
<line x1="1627.3" y1="375.2" x2="1622.3" y2="374.8" stroke="#4650a8" stroke-width="1.0" />
<line x1="1633.4" y1="358.8" x2="1624.6" y2="357.2" stroke="#4650a8" stroke-width="1.0" />
<line x1="1633.2" y1="341.3" x2="1628.4" y2="340.0" stroke="#4650a8" stroke-width="1.0" />
<line x1="1642.2" y1="326.1" x2="1633.7" y2="323.1" stroke="#4650a8" stroke-width="1.0" />
<line x1="1645.1" y1="308.8" x2="1640.5" y2="306.7" stroke="#4650a8" stroke-width="1.0" />
<line x1="1656.5" y1="295.5" x2="1648.7" y2="291.0" stroke="#4650a8" stroke-width="1.0" />
<line x1="1662.3" y1="278.9" x2="1658.2" y2="276.1" stroke="#4650a8" stroke-width="1.0" />
<line x1="1675.9" y1="267.8" x2="1669.0" y2="262.0" stroke="#4650a8" stroke-width="1.0" />
<line x1="1684.5" y1="252.5" x2="1681.0" y2="249.0" stroke="#4650a8" stroke-width="1.0" />
<line x1="1699.8" y1="243.9" x2="1694.0" y2="237.0" stroke="#4650a8" stroke-width="1.0" />
<line x1="1710.9" y1="230.3" x2="1708.1" y2="226.2" stroke="#4650a8" stroke-width="1.0" />
<line x1="1727.5" y1="224.5" x2="1723.0" y2="216.7" stroke="#4650a8" stroke-width="1.0" />
<line x1="1740.8" y1="213.1" x2="1738.7" y2="208.5" stroke="#4650a8" stroke-width="1.0" />
<line x1="1758.1" y1="210.2" x2="1755.1" y2="201.7" stroke="#4650a8" stroke-width="1.0" />
<line x1="1773.3" y1="201.2" x2="1772.0" y2="196.4" stroke="#4650a8" stroke-width="1.0" />
<line x1="1790.8" y1="201.4" x2="1789.2" y2="192.6" stroke="#4650a8" stroke-width="1.0" />
<line x1="1807.2" y1="195.3" x2="1806.8" y2="190.3" stroke="#4650a8" stroke-width="1.0" />
<line x1="1954.6" y1="262.4" x2="1963.8" y2="253.2" stroke="#777" stroke-width="1.3" />
<line x1="1954.6" y1="522.6" x2="1963.8" y2="531.8" stroke="#777" stroke-width="1.3" />
<line x1="1694.4" y1="522.6" x2="1685.2" y2="531.8" stroke="#777" stroke-width="1.3" />
<line x1="1694.4" y1="262.4" x2="1685.2" y2="253.2" stroke="#777" stroke-width="1.3" />
<circle cx="1824.5" cy="392.5" r="136.6" fill="none" stroke="#626262" stroke-width="1.0"/>
<circle cx="1824.5" cy="392.5" r="68.5" fill="none" stroke="#626262" stroke-width="1.0"/>
<line x1="1619.5" y1="392.5" x2="2029.5" y2="392.5" stroke="#8c8c8c" stroke-width="1.1" />
<line x1="1824.5" y1="187.5" x2="1824.5" y2="597.5" stroke="#8c8c8c" stroke-width="1.1" />
<text x="1823.5" y="184.5" font-size="24" fill="#2a58b0" font-family='"Liberation Serif", serif' font-weight="bold" text-anchor="middle" stroke="#eef2fa" stroke-width="2.4" paint-order="stroke">N</text>
<text x="1825.5" y="620.0" font-size="20" fill="#2a58b0" font-family='"Liberation Serif", serif' font-weight="bold" text-anchor="middle" stroke="#eef2fa" stroke-width="2.4" paint-order="stroke">S</text>
<text x="1608.5" y="401.0" font-size="22" fill="#2a58b0" font-family='"Liberation Serif", serif' font-weight="bold" text-anchor="middle" stroke="#eef2fa" stroke-width="2.4" paint-order="stroke">W</text>
<text x="2041.0" y="401.0" font-size="22" fill="#2a58b0" font-family='"Liberation Serif", serif' font-weight="bold" text-anchor="middle" stroke="#eef2fa" stroke-width="2.4" paint-order="stroke">E</text>
<text x="1824.5" y="210.0" font-size="20" fill="#d8a868" font-family='"DejaVu Sans", "Liberation Sans", sans-serif' font-weight="bold" text-anchor="middle" >0</text>
<text x="1824.5" y="282.0" font-size="22" fill="#e8c090" font-family='"DejaVu Sans", "Liberation Sans", sans-serif' font-weight="normal" text-anchor="middle" textLength="28.0" lengthAdjust="spacingAndGlyphs" >30</text>
<circle cx="1695.9" cy="306.5" r="15.5" fill="url(#bs20)" />
<text x="1695.9" y="310.5" font-size="11" fill="#d8d8d0" font-family='"DejaVu Sans", "Liberation Sans", sans-serif' font-weight="bold" text-anchor="middle" textLength="13.0" lengthAdjust="spacingAndGlyphs" >20</text>
<rect x="1677.9" y="325.0" width="36.0" height="2.6" fill="#7a7a7a" />
<circle cx="1918.5" cy="303.4" r="15.5" fill="url(#bs25)" />
<text x="1918.5" y="307.4" font-size="11" fill="#d8d8d0" font-family='"DejaVu Sans", "Liberation Sans", sans-serif' font-weight="bold" text-anchor="middle" textLength="13.0" lengthAdjust="spacingAndGlyphs" >25</text>
<rect x="1900.5" y="321.4" width="36.0" height="3.6" fill="#6a6a6a" />
<rect x="1900.5" y="321.4" width="25.9" height="3.6" fill="#f0f020" />
<circle cx="1821.9" cy="345.4" r="15.5" fill="url(#bs31)" />
<text x="1821.9" y="349.4" font-size="11" fill="#d8d8d0" font-family='"DejaVu Sans", "Liberation Sans", sans-serif' font-weight="bold" text-anchor="middle" textLength="13.0" lengthAdjust="spacingAndGlyphs" >31</text>
<rect x="1803.9" y="363.4" width="36.0" height="3.6" fill="#6a6a6a" />
<rect x="1803.9" y="363.4" width="28.8" height="3.6" fill="#20d020" />
<circle cx="1712.0" cy="375.8" r="15.5" fill="url(#bs32)" />
<text x="1712.0" y="379.8" font-size="11" fill="#d8d8d0" font-family='"DejaVu Sans", "Liberation Sans", sans-serif' font-weight="bold" text-anchor="middle" textLength="13.0" lengthAdjust="spacingAndGlyphs" >32</text>
<rect x="1694.0" y="393.8" width="36.0" height="3.6" fill="#6a6a6a" />
<rect x="1694.0" y="393.8" width="28.8" height="3.6" fill="#20d020" />
<circle cx="1964.0" cy="381.4" r="15.5" fill="url(#bs29)" />
<text x="1964.0" y="385.4" font-size="11" fill="#d8d8d0" font-family='"DejaVu Sans", "Liberation Sans", sans-serif' font-weight="bold" text-anchor="middle" textLength="13.0" lengthAdjust="spacingAndGlyphs" >29</text>
<rect x="1946.0" y="399.4" width="36.0" height="3.6" fill="#6a6a6a" />
<rect x="1946.0" y="399.4" width="28.1" height="3.6" fill="#f0f020" />
<circle cx="1766.2" cy="460.7" r="15.5" fill="url(#bs30)" />
<text x="1766.2" y="464.7" font-size="11" fill="#d8d8d0" font-family='"DejaVu Sans", "Liberation Sans", sans-serif' font-weight="bold" text-anchor="middle" textLength="13.0" lengthAdjust="spacingAndGlyphs" >30</text>
<rect x="1748.2" y="478.7" width="36.0" height="3.6" fill="#6a6a6a" />
<rect x="1748.2" y="478.7" width="28.1" height="3.6" fill="#20d020" />
<circle cx="1902.3" cy="451.6" r="15.5" fill="url(#bs14)" />
<text x="1902.3" y="455.6" font-size="11" fill="#d8d8d0" font-family='"DejaVu Sans", "Liberation Sans", sans-serif' font-weight="bold" text-anchor="middle" textLength="13.0" lengthAdjust="spacingAndGlyphs" >14</text>
<rect x="1884.3" y="469.6" width="36.0" height="3.6" fill="#6a6a6a" />
<rect x="1884.3" y="469.6" width="25.9" height="3.6" fill="#20d020" />
<circle cx="1737.4" cy="520.4" r="15.5" fill="url(#bs16)" />
<text x="1737.4" y="524.4" font-size="11" fill="#d8d8d0" font-family='"DejaVu Sans", "Liberation Sans", sans-serif' font-weight="bold" text-anchor="middle" textLength="13.0" lengthAdjust="spacingAndGlyphs" >16</text>
<rect x="1719.4" y="538.9" width="36.0" height="2.6" fill="#7a7a7a" />
<circle cx="1828.0" cy="585.7" r="15" fill="url(#bs22)" />
<text x="1828.0" y="589.7" font-size="11" fill="#f0f0f0" font-family='"DejaVu Sans", "Liberation Sans", sans-serif' font-weight="bold" text-anchor="middle" textLength="13.0" lengthAdjust="spacingAndGlyphs" >22</text>
<rect x="1544.0" y="633.0" width="561.0" height="89.0" fill="#1c3e7c" />
<rect x="1546.5" y="635.5" width="556.0" height="84.0" fill="url(#bStrip)" />
<rect x="1559.0" y="650.0" width="31.0" height="19.0" fill="#e8a0b0" />
<rect x="1559.0" y="650.0" width="31.0" height="2.0" fill="#d86a80" />
<rect x="1559.0" y="654.0" width="31.0" height="2.0" fill="#d86a80" />
<rect x="1559.0" y="658.0" width="31.0" height="2.0" fill="#d86a80" />
<rect x="1559.0" y="662.0" width="31.0" height="2.0" fill="#d86a80" />
<rect x="1559.0" y="666.0" width="31.0" height="2.0" fill="#d86a80" />
<rect x="1559.0" y="650.0" width="14.0" height="10.5" fill="#4a64a8" />
<rect x="1602.0" y="652.0" width="7.0" height="15.0" fill="#5a6a8a" />
<rect x="1607.0" y="650.0" width="10.0" height="15.0" fill="#2a3a5a" />
<rect x="1609.0" y="654.0" width="6.0" height="7.0" fill="#d8b830" />
<rect x="1619.0" y="648.0" width="8.0" height="20.0" fill="#a8b4cc" />
<text x="1647.0" y="667.0" font-size="22" fill="#e8ecf6" font-family='"DejaVu Sans", "Liberation Sans", sans-serif' font-weight="normal" text-anchor="start" textLength="36.0" lengthAdjust="spacingAndGlyphs" >5/9</text>
<text x="1746.0" y="683.0" font-size="19.5" fill="#e8ecf6" font-family='"DejaVu Sans", "Liberation Sans", sans-serif' font-weight="normal" text-anchor="start" textLength="157.0" lengthAdjust="spacingAndGlyphs" >No SV selected</text>
<rect x="2115.0" y="140.0" width="276.0" height="227.0" rx="7" fill="#2f4879" />
<rect x="2142.5" y="147.5" width="238.5" height="212.5" fill="#586c96" />
<line x1="2142.5" y1="328.4" x2="2381.0" y2="328.4" stroke="#8494b8" stroke-width="1.3" />
<line x1="2142.5" y1="301.1" x2="2381.0" y2="301.1" stroke="#8494b8" stroke-width="1.3" />
<line x1="2142.5" y1="285.2" x2="2381.0" y2="285.2" stroke="#8494b8" stroke-width="1.3" />
<line x1="2142.5" y1="273.9" x2="2381.0" y2="273.9" stroke="#8494b8" stroke-width="1.3" />
<line x1="2142.5" y1="265.1" x2="2381.0" y2="265.1" stroke="#8494b8" stroke-width="1.3" />
<line x1="2142.5" y1="258.0" x2="2381.0" y2="258.0" stroke="#8494b8" stroke-width="1.3" />
<line x1="2142.5" y1="251.9" x2="2381.0" y2="251.9" stroke="#8494b8" stroke-width="1.3" />
<line x1="2142.5" y1="246.7" x2="2381.0" y2="246.7" stroke="#8494b8" stroke-width="1.3" />
<line x1="2142.5" y1="242.1" x2="2381.0" y2="242.1" stroke="#8494b8" stroke-width="1.3" />
<line x1="2142.5" y1="237.9" x2="2381.0" y2="237.9" stroke="#8494b8" stroke-width="1.3" />
<line x1="2142.5" y1="210.7" x2="2381.0" y2="210.7" stroke="#8494b8" stroke-width="1.3" />
<line x1="2142.5" y1="194.8" x2="2381.0" y2="194.8" stroke="#8494b8" stroke-width="1.3" />
<line x1="2142.5" y1="183.5" x2="2381.0" y2="183.5" stroke="#8494b8" stroke-width="1.3" />
<line x1="2142.5" y1="174.7" x2="2381.0" y2="174.7" stroke="#8494b8" stroke-width="1.3" />
<line x1="2142.5" y1="167.6" x2="2381.0" y2="167.6" stroke="#8494b8" stroke-width="1.3" />
<line x1="2142.5" y1="161.5" x2="2381.0" y2="161.5" stroke="#8494b8" stroke-width="1.3" />
<line x1="2142.5" y1="156.3" x2="2381.0" y2="156.3" stroke="#8494b8" stroke-width="1.3" />
<line x1="2142.5" y1="151.6" x2="2381.0" y2="151.6" stroke="#8494b8" stroke-width="1.3" />
<line x1="2191.0" y1="147.5" x2="2191.0" y2="360.0" stroke="#8494b8" stroke-width="1.3" />
<line x1="2239.0" y1="147.5" x2="2239.0" y2="360.0" stroke="#8494b8" stroke-width="1.3" />
<line x1="2287.0" y1="147.5" x2="2287.0" y2="360.0" stroke="#8494b8" stroke-width="1.3" />
<line x1="2332.6" y1="147.5" x2="2332.6" y2="360.0" stroke="#8494b8" stroke-width="1.3" />
<rect x="2145.6" y="280.0" width="45.4" height="80.0" fill="#c42c3c" />
<rect x="2145.6" y="280.0" width="45.4" height="2.5" fill="#e06070" />
<rect x="2191.0" y="276.5" width="48.0" height="83.5" fill="#20c4d4" />
<rect x="2191.0" y="276.5" width="48.0" height="2.5" fill="#80f0f8" />
<rect x="2239.0" y="307.0" width="48.0" height="53.0" fill="#28c838" />
<rect x="2239.0" y="307.0" width="48.0" height="2.5" fill="#60e070" />
<rect x="2287.0" y="286.5" width="45.6" height="73.5" fill="#c82cd8" />
<rect x="2287.0" y="286.5" width="45.6" height="2.5" fill="#e070f0" />
<rect x="2332.6" y="267.5" width="48.4" height="92.5" fill="#c8c83c" />
<rect x="2332.6" y="267.5" width="48.4" height="2.5" fill="#e8e870" />
<text x="2139.0" y="151.5" font-size="8.5" fill="#e0e6f4" font-family='"DejaVu Sans", "Liberation Sans", sans-serif' font-weight="bold" text-anchor="end" >100</text>
<text x="2139.0" y="186.5" font-size="8.5" fill="#e0e6f4" font-family='"DejaVu Sans", "Liberation Sans", sans-serif' font-weight="bold" text-anchor="end" >50</text>
<text x="2139.0" y="226.5" font-size="8.5" fill="#e0e6f4" font-family='"DejaVu Sans", "Liberation Sans", sans-serif' font-weight="bold" text-anchor="end" >20</text>
<text x="2139.0" y="255.5" font-size="8.5" fill="#e0e6f4" font-family='"DejaVu Sans", "Liberation Sans", sans-serif' font-weight="bold" text-anchor="end" >10</text>
<text x="2139.0" y="282.5" font-size="8.5" fill="#e0e6f4" font-family='"DejaVu Sans", "Liberation Sans", sans-serif' font-weight="bold" text-anchor="end" >5</text>
<text x="2139.0" y="313.5" font-size="8.5" fill="#e0e6f4" font-family='"DejaVu Sans", "Liberation Sans", sans-serif' font-weight="bold" text-anchor="end" >2</text>
<text x="2139.0" y="333.5" font-size="8.5" fill="#e0e6f4" font-family='"DejaVu Sans", "Liberation Sans", sans-serif' font-weight="bold" text-anchor="end" >1</text>
<rect x="2113.0" y="372.0" width="280.0" height="45.0" fill="#1c3e7c" />
<rect x="2115.0" y="374.0" width="276.0" height="41.0" fill="url(#bStrip)" />
<text x="2151.0" y="392.0" font-size="10.5" fill="#e02838" font-family='"DejaVu Sans", "Liberation Sans", sans-serif' font-weight="bold" text-anchor="middle" textLength="32.0" lengthAdjust="spacingAndGlyphs" >HDOP</text>
<text x="2151.0" y="405.5" font-size="10.5" fill="#e8ecf6" font-family='"DejaVu Sans Mono", monospace' font-weight="bold" text-anchor="middle" textLength="35.0" lengthAdjust="spacingAndGlyphs" >4.683</text>
<text x="2206.0" y="392.0" font-size="10.5" fill="#20c8e0" font-family='"DejaVu Sans", "Liberation Sans", sans-serif' font-weight="bold" text-anchor="middle" textLength="32.0" lengthAdjust="spacingAndGlyphs" >PDOP</text>
<text x="2206.0" y="405.5" font-size="10.5" fill="#e8ecf6" font-family='"DejaVu Sans Mono", monospace' font-weight="bold" text-anchor="middle" textLength="35.0" lengthAdjust="spacingAndGlyphs" >5.175</text>
<text x="2254.0" y="392.0" font-size="10.5" fill="#20d030" font-family='"DejaVu Sans", "Liberation Sans", sans-serif' font-weight="bold" text-anchor="middle" textLength="32.0" lengthAdjust="spacingAndGlyphs" >VDOP</text>
<text x="2254.0" y="405.5" font-size="10.5" fill="#e8ecf6" font-family='"DejaVu Sans Mono", monospace' font-weight="bold" text-anchor="middle" textLength="35.0" lengthAdjust="spacingAndGlyphs" >2.205</text>
<text x="2303.0" y="392.0" font-size="10.5" fill="#d828e8" font-family='"DejaVu Sans", "Liberation Sans", sans-serif' font-weight="bold" text-anchor="middle" textLength="32.0" lengthAdjust="spacingAndGlyphs" >TDOP</text>
<text x="2303.0" y="405.5" font-size="10.5" fill="#e8ecf6" font-family='"DejaVu Sans Mono", monospace' font-weight="bold" text-anchor="middle" textLength="35.0" lengthAdjust="spacingAndGlyphs" >3.041</text>
<text x="2357.0" y="392.0" font-size="10.5" fill="#d0d020" font-family='"DejaVu Sans", "Liberation Sans", sans-serif' font-weight="bold" text-anchor="middle" textLength="32.0" lengthAdjust="spacingAndGlyphs" >GDOP</text>
<text x="2357.0" y="405.5" font-size="10.5" fill="#e8ecf6" font-family='"DejaVu Sans Mono", monospace' font-weight="bold" text-anchor="middle" textLength="35.0" lengthAdjust="spacingAndGlyphs" >6.505</text>
<rect x="2114.5" y="466.0" width="275.5" height="227.5" rx="7" fill="#2f4879" />
<rect x="2143.0" y="470.0" width="27.0" height="24.0" fill="#4a628e" />
<rect x="2147.0" y="487.0" width="3.0" height="3.0" fill="#e02020" />
<rect x="2151.0" y="485.0" width="3.0" height="5.0" fill="#e02020" />
<rect x="2155.0" y="482.0" width="3.0" height="8.0" fill="#e8e020" />
<rect x="2159.0" y="479.0" width="3.0" height="11.0" fill="#e8e020" />
<rect x="2163.0" y="476.0" width="3.0" height="14.0" fill="#20d020" />
<line x1="2192.0" y1="488.0" x2="2215.0" y2="474.0" stroke="#a8a838" stroke-width="3" />
<text x="2252.0" y="486.0" font-size="12" fill="#38a048" font-family='"DejaVu Sans", "Liberation Sans", sans-serif' font-weight="bold" text-anchor="middle" >(•)</text>
<text x="2302.7" y="486.0" font-size="13" fill="#6a80a8" font-family='"DejaVu Sans", "Liberation Sans", sans-serif' font-weight="normal" text-anchor="middle" >Σ</text>
<circle cx="2351.8" cy="481.0" r="6.5" fill="#5a80b8" />
<line x1="2120.0" y1="495.0" x2="2386.0" y2="495.0" stroke="#4a628e" stroke-width="1.5" />
<text x="2171.0" y="509.0" font-size="10" fill="#c0c8dc" font-family='"DejaVu Sans", "Liberation Sans", sans-serif' font-weight="normal" text-anchor="start" textLength="148.0" lengthAdjust="spacingAndGlyphs" >Signal/Noise Ratio (GPS</text>
<rect x="2320.5" y="501.0" width="14.0" height="8.5" fill="#e8a0b0" />
<rect x="2320.5" y="501.0" width="14.0" height="2.0" fill="#d86a80" />
<rect x="2320.5" y="505.0" width="14.0" height="2.0" fill="#d86a80" />
<rect x="2320.5" y="501.0" width="6.3" height="4.7" fill="#4a64a8" />
<text x="2336.0" y="509.0" font-size="10.5" fill="#d0d8ea" font-family='"DejaVu Sans", "Liberation Sans", sans-serif' font-weight="normal" text-anchor="start" >)</text>
<rect x="2116.5" y="515.0" width="7.5" height="138.0" fill="url(#bSc)" />
<text x="2134.5" y="518.0" font-size="7.5" fill="#e0e6f4" font-family='"DejaVu Sans", "Liberation Sans", sans-serif' font-weight="bold" text-anchor="end" >60</text>
<text x="2134.5" y="540.7" font-size="7.5" fill="#e0e6f4" font-family='"DejaVu Sans", "Liberation Sans", sans-serif' font-weight="bold" text-anchor="end" >50</text>
<text x="2134.5" y="563.4" font-size="7.5" fill="#e0e6f4" font-family='"DejaVu Sans", "Liberation Sans", sans-serif' font-weight="bold" text-anchor="end" >40</text>
<text x="2134.5" y="586.1" font-size="7.5" fill="#e0e6f4" font-family='"DejaVu Sans", "Liberation Sans", sans-serif' font-weight="bold" text-anchor="end" >30</text>
<text x="2134.5" y="608.8" font-size="7.5" fill="#e0e6f4" font-family='"DejaVu Sans", "Liberation Sans", sans-serif' font-weight="bold" text-anchor="end" >20</text>
<text x="2134.5" y="631.5" font-size="7.5" fill="#e0e6f4" font-family='"DejaVu Sans", "Liberation Sans", sans-serif' font-weight="bold" text-anchor="end" >10</text>
<text x="2134.5" y="654.2" font-size="7.5" fill="#e0e6f4" font-family='"DejaVu Sans", "Liberation Sans", sans-serif' font-weight="bold" text-anchor="end" >0</text>
<rect x="2140.9" y="515.5" width="4.6" height="137.5" fill="#3d5588" stroke="#8292b8" stroke-width="1.1"/>
<rect x="2146.1" y="515.5" width="4.6" height="137.5" fill="#3d5588" stroke="#8292b8" stroke-width="1.1"/>
<rect x="2141.1" y="546.8" width="4.4" height="106.2" fill="#20e8f0" />
<rect x="2156.2" y="515.0" width="9.0" height="138.0" fill="#8c9cc0" />
<rect x="2156.4" y="515.5" width="4.6" height="137.5" fill="#8c9cc0" stroke="#8292b8" stroke-width="1.1"/>
<rect x="2161.6" y="515.5" width="4.6" height="137.5" fill="#8c9cc0" stroke="#8292b8" stroke-width="1.1"/>
<rect x="2156.6" y="546.8" width="4.4" height="106.2" fill="#20e8f0" />
<rect x="2161.7" y="640.4" width="4.4" height="12.6" fill="#e830e8" />
<rect x="2171.6" y="515.0" width="9.0" height="138.0" fill="#8c9cc0" />
<rect x="2171.8" y="515.5" width="4.6" height="137.5" fill="#8c9cc0" stroke="#8292b8" stroke-width="1.1"/>
<rect x="2177.0" y="515.5" width="4.6" height="137.5" fill="#8c9cc0" stroke="#8292b8" stroke-width="1.1"/>
<rect x="2172.0" y="542.7" width="4.4" height="110.3" fill="#20e8f0" />
<rect x="2177.1" y="616.0" width="4.4" height="37.0" fill="#e830e8" />
<rect x="2187.3" y="515.5" width="4.6" height="137.5" fill="#3d5588" stroke="#8292b8" stroke-width="1.1"/>
<rect x="2192.5" y="515.5" width="4.6" height="137.5" fill="#3d5588" stroke="#8292b8" stroke-width="1.1"/>
<rect x="2187.5" y="554.4" width="4.4" height="98.6" fill="#20e8f0" />
<rect x="2202.8" y="515.5" width="4.6" height="137.5" fill="#3d5588" stroke="#8292b8" stroke-width="1.1"/>
<rect x="2208.0" y="515.5" width="4.6" height="137.5" fill="#3d5588" stroke="#8292b8" stroke-width="1.1"/>
<rect x="2218.2" y="515.5" width="4.6" height="137.5" fill="#3d5588" stroke="#8292b8" stroke-width="1.1"/>
<rect x="2223.4" y="515.5" width="4.6" height="137.5" fill="#3d5588" stroke="#8292b8" stroke-width="1.1"/>
<rect x="2233.5" y="515.0" width="9.0" height="138.0" fill="#8c9cc0" />
<rect x="2233.7" y="515.5" width="4.6" height="137.5" fill="#8c9cc0" stroke="#8292b8" stroke-width="1.1"/>
<rect x="2238.9" y="515.5" width="4.6" height="137.5" fill="#8c9cc0" stroke="#8292b8" stroke-width="1.1"/>
<rect x="2233.9" y="550.3" width="4.4" height="102.7" fill="#20e8f0" />
<rect x="2239.0" y="633.8" width="4.4" height="19.2" fill="#e830e8" />
<rect x="2249.2" y="515.5" width="4.6" height="137.5" fill="#3d5588" stroke="#8292b8" stroke-width="1.1"/>
<rect x="2254.4" y="515.5" width="4.6" height="137.5" fill="#3d5588" stroke="#8292b8" stroke-width="1.1"/>
<rect x="2264.7" y="515.5" width="4.6" height="137.5" fill="#3d5588" stroke="#8292b8" stroke-width="1.1"/>
<rect x="2269.9" y="515.5" width="4.6" height="137.5" fill="#3d5588" stroke="#8292b8" stroke-width="1.1"/>
<rect x="2280.1" y="515.5" width="4.6" height="137.5" fill="#3d5588" stroke="#8292b8" stroke-width="1.1"/>
<rect x="2285.3" y="515.5" width="4.6" height="137.5" fill="#3d5588" stroke="#8292b8" stroke-width="1.1"/>
<rect x="2295.6" y="515.5" width="4.6" height="137.5" fill="#3d5588" stroke="#8292b8" stroke-width="1.1"/>
<rect x="2300.8" y="515.5" width="4.6" height="137.5" fill="#3d5588" stroke="#8292b8" stroke-width="1.1"/>
<rect x="2311.1" y="515.5" width="4.6" height="137.5" fill="#3d5588" stroke="#8292b8" stroke-width="1.1"/>
<rect x="2316.3" y="515.5" width="4.6" height="137.5" fill="#3d5588" stroke="#8292b8" stroke-width="1.1"/>
<rect x="2326.5" y="515.5" width="4.6" height="137.5" fill="#3d5588" stroke="#8292b8" stroke-width="1.1"/>
<rect x="2331.7" y="515.5" width="4.6" height="137.5" fill="#3d5588" stroke="#8292b8" stroke-width="1.1"/>
<rect x="2341.8" y="515.0" width="9.0" height="138.0" fill="#8c9cc0" />
<rect x="2342.0" y="515.5" width="4.6" height="137.5" fill="#8c9cc0" stroke="#8292b8" stroke-width="1.1"/>
<rect x="2347.2" y="515.5" width="4.6" height="137.5" fill="#8c9cc0" stroke="#8292b8" stroke-width="1.1"/>
<rect x="2342.2" y="549.3" width="4.4" height="103.7" fill="#20e8f0" />
<rect x="2347.3" y="601.4" width="4.4" height="51.6" fill="#e830e8" />
<rect x="2357.5" y="515.5" width="4.6" height="137.5" fill="#3d5588" stroke="#8292b8" stroke-width="1.1"/>
<rect x="2362.7" y="515.5" width="4.6" height="137.5" fill="#3d5588" stroke="#8292b8" stroke-width="1.1"/>
<rect x="2372.9" y="515.5" width="4.6" height="137.5" fill="#3d5588" stroke="#8292b8" stroke-width="1.1"/>
<rect x="2378.1" y="515.5" width="4.6" height="137.5" fill="#3d5588" stroke="#8292b8" stroke-width="1.1"/>
<line x1="2134.0" y1="550.8" x2="2387.0" y2="550.8" stroke="#2c9c40" stroke-width="1.2" />
<line x1="2134.0" y1="572.0" x2="2387.0" y2="572.0" stroke="#b83040" stroke-width="1.2" />
<text x="2118.0" y="670.5" font-size="7.5" fill="#e0e6f4" font-family='"DejaVu Sans", "Liberation Sans", sans-serif' font-weight="bold" text-anchor="start" >PRN</text>
<text x="2118.0" y="687.0" font-size="7.5" fill="#e0e6f4" font-family='"DejaVu Sans", "Liberation Sans", sans-serif' font-weight="bold" text-anchor="start" >Ch.</text>
<rect x="2139.7" y="662.0" width="12.5" height="10.0" fill="#3c5486" />
<text x="2145.7" y="670.5" font-size="7.5" fill="#e0e6f4" font-family='"DejaVu Sans", "Liberation Sans", sans-serif' font-weight="bold" text-anchor="middle" >29</text>
<rect x="2139.7" y="678.5" width="12.5" height="10.0" fill="#3c5486" />
<text x="2145.7" y="687.0" font-size="7.5" fill="#e0e6f4" font-family='"DejaVu Sans", "Liberation Sans", sans-serif' font-weight="bold" text-anchor="middle" >0</text>
<rect x="2155.2" y="662.0" width="12.5" height="10.0" fill="#3c5486" />
<text x="2161.2" y="670.5" font-size="7.5" fill="#e0e6f4" font-family='"DejaVu Sans", "Liberation Sans", sans-serif' font-weight="bold" text-anchor="middle" >32</text>
<rect x="2155.2" y="678.5" width="12.5" height="10.0" fill="#3c5486" />
<text x="2161.2" y="687.0" font-size="7.5" fill="#e0e6f4" font-family='"DejaVu Sans", "Liberation Sans", sans-serif' font-weight="bold" text-anchor="middle" >1</text>
<rect x="2170.6" y="662.0" width="12.5" height="10.0" fill="#3c5486" />
<text x="2176.6" y="670.5" font-size="7.5" fill="#e0e6f4" font-family='"DejaVu Sans", "Liberation Sans", sans-serif' font-weight="bold" text-anchor="middle" >31</text>
<rect x="2170.6" y="678.5" width="12.5" height="10.0" fill="#3c5486" />
<text x="2176.6" y="687.0" font-size="7.5" fill="#e0e6f4" font-family='"DejaVu Sans", "Liberation Sans", sans-serif' font-weight="bold" text-anchor="middle" >2</text>
<rect x="2186.1" y="662.0" width="12.5" height="10.0" fill="#3c5486" />
<text x="2192.1" y="670.5" font-size="7.5" fill="#e0e6f4" font-family='"DejaVu Sans", "Liberation Sans", sans-serif' font-weight="bold" text-anchor="middle" >30</text>
<rect x="2186.1" y="678.5" width="12.5" height="10.0" fill="#3c5486" />
<text x="2192.1" y="687.0" font-size="7.5" fill="#e0e6f4" font-family='"DejaVu Sans", "Liberation Sans", sans-serif' font-weight="bold" text-anchor="middle" >3</text>
<rect x="2201.6" y="662.0" width="12.5" height="10.0" fill="#3c5486" />
<text x="2207.6" y="670.5" font-size="7.5" fill="#e0e6f4" font-family='"DejaVu Sans", "Liberation Sans", sans-serif' font-weight="bold" text-anchor="middle" >14</text>
<rect x="2201.6" y="678.5" width="12.5" height="10.0" fill="#3c5486" />
<text x="2207.6" y="687.0" font-size="7.5" fill="#e0e6f4" font-family='"DejaVu Sans", "Liberation Sans", sans-serif' font-weight="bold" text-anchor="middle" >4</text>
<rect x="2217.0" y="662.0" width="12.5" height="10.0" fill="#3c5486" />
<text x="2223.0" y="670.5" font-size="7.5" fill="#e0e6f4" font-family='"DejaVu Sans", "Liberation Sans", sans-serif' font-weight="bold" text-anchor="middle" >25</text>
<rect x="2217.0" y="678.5" width="12.5" height="10.0" fill="#3c5486" />
<text x="2223.0" y="687.0" font-size="7.5" fill="#e0e6f4" font-family='"DejaVu Sans", "Liberation Sans", sans-serif' font-weight="bold" text-anchor="middle" >5</text>
<rect x="2232.5" y="662.0" width="12.5" height="10.0" fill="#3c5486" />
<text x="2238.5" y="670.5" font-size="7.5" fill="#e0e6f4" font-family='"DejaVu Sans", "Liberation Sans", sans-serif' font-weight="bold" text-anchor="middle" >20</text>
<rect x="2232.5" y="678.5" width="12.5" height="10.0" fill="#3c5486" />
<text x="2238.5" y="687.0" font-size="7.5" fill="#e0e6f4" font-family='"DejaVu Sans", "Liberation Sans", sans-serif' font-weight="bold" text-anchor="middle" >6</text>
<rect x="2248.0" y="662.0" width="12.5" height="10.0" fill="#3c5486" />
<text x="2254.0" y="670.5" font-size="7.5" fill="#e0e6f4" font-family='"DejaVu Sans", "Liberation Sans", sans-serif' font-weight="bold" text-anchor="middle" >16</text>
<rect x="2248.0" y="678.5" width="12.5" height="10.0" fill="#3c5486" />
<text x="2254.0" y="687.0" font-size="7.5" fill="#e0e6f4" font-family='"DejaVu Sans", "Liberation Sans", sans-serif' font-weight="bold" text-anchor="middle" >7</text>
<rect x="2263.5" y="662.0" width="12.5" height="10.0" fill="#3c5486" />
<rect x="2263.5" y="662.0" width="12.5" height="10.0" fill="#2a9cc0" />
<text x="2269.5" y="670.3" font-size="6.5" fill="#1a3a6a" font-family='"DejaVu Sans", "Liberation Sans", sans-serif' font-weight="bold" text-anchor="middle" >N/A</text>
<rect x="2263.5" y="678.5" width="12.5" height="10.0" fill="#3c5486" />
<text x="2269.5" y="687.0" font-size="7.5" fill="#e0e6f4" font-family='"DejaVu Sans", "Liberation Sans", sans-serif' font-weight="bold" text-anchor="middle" >8</text>
<rect x="2278.9" y="662.0" width="12.5" height="10.0" fill="#3c5486" />
<rect x="2278.9" y="662.0" width="12.5" height="10.0" fill="#2a9cc0" />
<text x="2284.9" y="670.3" font-size="6.5" fill="#1a3a6a" font-family='"DejaVu Sans", "Liberation Sans", sans-serif' font-weight="bold" text-anchor="middle" >N/A</text>
<rect x="2278.9" y="678.5" width="12.5" height="10.0" fill="#3c5486" />
<text x="2284.9" y="687.0" font-size="7.5" fill="#e0e6f4" font-family='"DejaVu Sans", "Liberation Sans", sans-serif' font-weight="bold" text-anchor="middle" >9</text>
<rect x="2294.4" y="662.0" width="12.5" height="10.0" fill="#3c5486" />
<rect x="2294.4" y="662.0" width="12.5" height="10.0" fill="#2a9cc0" />
<text x="2300.4" y="670.3" font-size="6.5" fill="#1a3a6a" font-family='"DejaVu Sans", "Liberation Sans", sans-serif' font-weight="bold" text-anchor="middle" >N/A</text>
<rect x="2294.4" y="678.5" width="12.5" height="10.0" fill="#3c5486" />
<text x="2300.4" y="687.0" font-size="7.5" fill="#e0e6f4" font-family='"DejaVu Sans", "Liberation Sans", sans-serif' font-weight="bold" text-anchor="middle" >10</text>
<rect x="2309.9" y="662.0" width="12.5" height="10.0" fill="#3c5486" />
<rect x="2309.9" y="662.0" width="12.5" height="10.0" fill="#2a9cc0" />
<text x="2315.9" y="670.3" font-size="6.5" fill="#1a3a6a" font-family='"DejaVu Sans", "Liberation Sans", sans-serif' font-weight="bold" text-anchor="middle" >N/A</text>
<rect x="2309.9" y="678.5" width="12.5" height="10.0" fill="#3c5486" />
<text x="2315.9" y="687.0" font-size="7.5" fill="#e0e6f4" font-family='"DejaVu Sans", "Liberation Sans", sans-serif' font-weight="bold" text-anchor="middle" >11</text>
<rect x="2325.3" y="662.0" width="12.5" height="10.0" fill="#3c5486" />
<rect x="2325.3" y="662.0" width="12.5" height="10.0" fill="#2a9cc0" />
<text x="2331.3" y="670.3" font-size="6.5" fill="#1a3a6a" font-family='"DejaVu Sans", "Liberation Sans", sans-serif' font-weight="bold" text-anchor="middle" >N/A</text>
<rect x="2325.3" y="678.5" width="12.5" height="10.0" fill="#3c5486" />
<text x="2331.3" y="687.0" font-size="7.5" fill="#e0e6f4" font-family='"DejaVu Sans", "Liberation Sans", sans-serif' font-weight="bold" text-anchor="middle" >12</text>
<rect x="2340.8" y="662.0" width="12.5" height="10.0" fill="#3c5486" />
<text x="2346.8" y="670.5" font-size="7.5" fill="#e0e6f4" font-family='"DejaVu Sans", "Liberation Sans", sans-serif' font-weight="bold" text-anchor="middle" >22</text>
<rect x="2340.8" y="678.5" width="12.5" height="10.0" fill="#3c5486" />
<text x="2346.8" y="687.0" font-size="7.5" fill="#e0e6f4" font-family='"DejaVu Sans", "Liberation Sans", sans-serif' font-weight="bold" text-anchor="middle" >13</text>
<rect x="2356.3" y="662.0" width="12.5" height="10.0" fill="#3c5486" />
<rect x="2356.3" y="662.0" width="12.5" height="10.0" fill="#2a9cc0" />
<text x="2362.3" y="670.3" font-size="6.5" fill="#1a3a6a" font-family='"DejaVu Sans", "Liberation Sans", sans-serif' font-weight="bold" text-anchor="middle" >N/A</text>
<rect x="2356.3" y="678.5" width="12.5" height="10.0" fill="#3c5486" />
<text x="2362.3" y="687.0" font-size="7.5" fill="#e0e6f4" font-family='"DejaVu Sans", "Liberation Sans", sans-serif' font-weight="bold" text-anchor="middle" >14</text>
<rect x="2371.8" y="662.0" width="12.5" height="10.0" fill="#3c5486" />
<rect x="2371.8" y="662.0" width="12.5" height="10.0" fill="#2a9cc0" />
<text x="2377.8" y="670.3" font-size="6.5" fill="#1a3a6a" font-family='"DejaVu Sans", "Liberation Sans", sans-serif' font-weight="bold" text-anchor="middle" >N/A</text>
<rect x="2371.8" y="678.5" width="12.5" height="10.0" fill="#3c5486" />
<text x="2377.8" y="687.0" font-size="7.5" fill="#e0e6f4" font-family='"DejaVu Sans", "Liberation Sans", sans-serif' font-weight="bold" text-anchor="middle" >15</text>
<rect x="2112.5" y="699.0" width="279.5" height="44.5" fill="#1c3e7c" />
<rect x="2114.5" y="701.0" width="275.5" height="40.5" fill="url(#bStrip)" />
<line x1="2234.0" y1="703.0" x2="2234.0" y2="740.0" stroke="#3a5a9a" stroke-width="1.2" />
<line x1="2328.0" y1="703.0" x2="2328.0" y2="740.0" stroke="#3a5a9a" stroke-width="1.2" />
<rect x="2127.0" y="710.0" width="7.0" height="7.0" fill="#20e8f0" />
<text x="2136.0" y="717.0" font-size="8" fill="#e0e6f4" font-family='"DejaVu Sans", "Liberation Sans", sans-serif' font-weight="bold" text-anchor="start" >L1C</text>
<rect x="2172.0" y="710.0" width="7.0" height="7.0" fill="#e830e8" />
<text x="2181.0" y="717.0" font-size="8" fill="#e0e6f4" font-family='"DejaVu Sans", "Liberation Sans", sans-serif' font-weight="bold" text-anchor="start" >L2P(Y)</text>
<rect x="2127.0" y="722.5" width="7.0" height="7.0" fill="#8030e0" />
<text x="2136.0" y="729.5" font-size="8" fill="#e0e6f4" font-family='"DejaVu Sans", "Liberation Sans", sans-serif' font-weight="bold" text-anchor="start" >SBAS</text>
<text x="2378.5" y="712.0" font-size="7.5" fill="#e0e6f4" font-family='"DejaVu Sans", "Liberation Sans", sans-serif' font-weight="bold" text-anchor="end" >Good (&gt;45)</text>
<text x="2378.5" y="723.5" font-size="7.5" fill="#e0e6f4" font-family='"DejaVu Sans", "Liberation Sans", sans-serif' font-weight="bold" text-anchor="end" >Avg (&gt;35)</text>
<text x="2378.5" y="735.0" font-size="7.5" fill="#e0e6f4" font-family='"DejaVu Sans", "Liberation Sans", sans-serif' font-weight="bold" text-anchor="end" >Poor (&lt;35)</text>
<rect x="2381.0" y="703.6" width="6.7" height="35.4" fill="url(#bSc)" />
</g>
<g id="panelC" filter="url(#blC)">
<rect x="2440.0" y="17.8" width="1217.0" height="899.5" fill="#ebe8e2" />
<rect x="3647.4" y="22.0" width="9.6" height="895.0" fill="url(#cRB)" />
<rect x="2440.0" y="906.0" width="1217.0" height="11.0" fill="url(#cBB)" />
<rect x="2449.5" y="27.3" width="1198.0" height="879.0" fill="#2f5fb3" />
<rect x="2449.5" y="27.3" width="1198.0" height="33.5" fill="url(#cT)" />
<rect x="2449.5" y="60.3" width="1198.0" height="3.4" fill="#b4ccf4" />
<text x="2453.5" y="51.0" font-size="26" fill="#eef6ff" font-family='"Liberation Mono", monospace' font-weight="normal" text-anchor="start" textLength="639.0" lengthAdjust="spacingAndGlyphs" stroke="#eef6ff" stroke-width="0.7">CONFIG - INS Position, Velocity, Attitude</text>
<rect x="3621.5" y="29.4" width="20.5" height="26.0" fill="#8a8a8a" />
<rect x="3621.5" y="29.4" width="19.0" height="24.5" fill="#ececec" />
<text x="3631.5" y="50.0" font-size="24" fill="#222" font-family='"Liberation Sans", Arial, sans-serif' font-weight="bold" text-anchor="middle" >×</text>
<circle cx="2750.5" cy="439" r="243" fill="#1c3c80" opacity="0.4"/>
<polygon points="2747.0,194.0 2768.9,194.8 2766.6,223.7 2747.3,223.0" fill="#a09c8c"/>
<polygon points="2763.9,194.4 2785.7,196.7 2781.4,225.4 2762.1,223.4" fill="#a19d8d"/>
<polygon points="2780.7,196.0 2802.3,199.8 2796.0,228.1 2776.9,224.8" fill="#a39f8f"/>
<polygon points="2797.3,198.8 2818.6,204.1 2810.4,231.9 2791.6,227.2" fill="#a5a191"/>
<polygon points="2813.8,202.7 2834.6,209.5 2824.4,236.6 2806.1,230.6" fill="#a8a494"/>
<polygon points="2829.9,207.7 2850.2,216.0 2838.2,242.3 2820.3,235.1" fill="#aba797"/>
<polygon points="2845.6,213.9 2865.3,223.5 2851.5,249.0 2834.1,240.5" fill="#aeaa9a"/>
<polygon points="2860.9,221.1 2879.9,232.1 2864.3,256.6 2847.5,246.9" fill="#b1ad9d"/>
<polygon points="2875.6,229.4 2893.8,241.7 2876.5,265.0 2860.5,254.2" fill="#b4b0a0"/>
<polygon points="2889.7,238.7 2907.0,252.3 2888.1,274.3 2872.9,262.4" fill="#b6b2a2"/>
<polygon points="2903.1,249.0 2919.4,263.7 2899.1,284.3 2884.7,271.4" fill="#b7b3a3"/>
<polygon points="2915.8,260.2 2931.0,276.0 2909.3,295.1 2895.8,281.2" fill="#b7b3a4"/>
<polygon points="2927.6,272.2 2941.7,289.0 2918.7,306.6 2906.3,291.8" fill="#b7b3a4"/>
<polygon points="2938.6,285.0 2951.5,302.8 2927.3,318.7 2916.0,303.1" fill="#b6b3a4"/>
<polygon points="2948.7,298.6 2960.3,317.2 2935.1,331.4 2924.8,315.0" fill="#b5b2a4"/>
<polygon points="2957.8,312.8 2968.1,332.2 2941.9,344.6 2932.8,327.6" fill="#b4b1a4"/>
<polygon points="2965.9,327.6 2974.8,347.7 2947.8,358.3 2940.0,340.6" fill="#b2b0a4"/>
<polygon points="2972.9,343.0 2980.4,363.6 2952.8,372.3 2946.1,354.1" fill="#b1afa4"/>
<polygon points="2978.9,358.8 2984.9,379.9 2956.7,386.6 2951.4,368.1" fill="#afaea4"/>
<polygon points="2983.7,375.0 2988.3,396.5 2959.6,401.2 2955.6,382.3" fill="#aeada4"/>
<polygon points="2987.4,391.5 2990.4,413.2 2961.6,416.0 2958.9,396.8" fill="#adaca4"/>
<polygon points="2989.9,408.2 2991.4,430.1 2962.4,430.8 2961.1,411.5" fill="#acaca4"/>
<polygon points="2991.3,425.0 2991.3,447.0 2962.3,445.7 2962.3,426.3" fill="#acaca4"/>
<polygon points="2991.4,441.9 2989.9,463.8 2961.1,460.5 2962.4,441.2" fill="#acaca4"/>
<polygon points="2990.4,458.8 2987.4,480.5 2958.9,475.2 2961.6,456.0" fill="#acaca5"/>
<polygon points="2988.3,475.5 2983.7,497.0 2955.6,489.7 2959.6,470.8" fill="#adada7"/>
<polygon points="2984.9,492.1 2978.9,513.2 2951.4,503.9 2956.7,485.4" fill="#aeaea9"/>
<polygon points="2980.4,508.4 2972.9,529.0 2946.1,517.9 2952.8,499.7" fill="#b0b0ab"/>
<polygon points="2974.8,524.3 2965.9,544.4 2940.0,531.4 2947.8,513.7" fill="#b1b1ad"/>
<polygon points="2968.1,539.8 2957.8,559.2 2932.8,544.4 2941.9,527.4" fill="#b2b2b0"/>
<polygon points="2960.3,554.8 2948.7,573.4 2924.8,557.0 2935.1,540.6" fill="#b3b3b2"/>
<polygon points="2951.5,569.2 2938.6,587.0 2916.0,568.9 2927.3,553.3" fill="#b4b4b4"/>
<polygon points="2941.7,583.0 2927.6,599.8 2906.3,580.2 2918.7,565.4" fill="#b5b5b5"/>
<polygon points="2931.0,596.0 2915.8,611.8 2895.8,590.8 2909.3,576.9" fill="#b5b5b5"/>
<polygon points="2919.4,608.3 2903.1,623.0 2884.7,600.6 2899.1,587.7" fill="#b6b6b6"/>
<polygon points="2907.0,619.7 2889.7,633.3 2872.9,609.6 2888.1,597.7" fill="#b8b8b9"/>
<polygon points="2893.8,630.3 2875.6,642.6 2860.5,617.8 2876.5,607.0" fill="#bcbcbd"/>
<polygon points="2879.9,639.9 2860.9,650.9 2847.5,625.1 2864.3,615.4" fill="#c1c1c2"/>
<polygon points="2865.3,648.5 2845.6,658.1 2834.1,631.5 2851.5,623.0" fill="#c6c7c9"/>
<polygon points="2850.2,656.0 2829.9,664.3 2820.3,636.9 2838.2,629.7" fill="#cccdcf"/>
<polygon points="2834.6,662.5 2813.8,669.3 2806.1,641.4 2824.4,635.4" fill="#d2d3d6"/>
<polygon points="2818.6,667.9 2797.3,673.2 2791.6,644.8 2810.4,640.1" fill="#d7d9dc"/>
<polygon points="2802.3,672.2 2780.7,676.0 2776.9,647.2 2796.0,643.9" fill="#dcdee1"/>
<polygon points="2785.7,675.3 2763.9,677.6 2762.1,648.6 2781.4,646.6" fill="#dfe1e5"/>
<polygon points="2768.9,677.2 2747.0,678.0 2747.3,649.0 2766.6,648.3" fill="#e1e3e7"/>
<polygon points="2752.0,678.0 2730.1,677.2 2732.4,648.3 2751.7,649.0" fill="#e2e4e8"/>
<polygon points="2735.1,677.6 2713.3,675.3 2717.6,646.6 2736.9,648.6" fill="#e2e4e8"/>
<polygon points="2718.3,676.0 2696.7,672.2 2703.0,643.9 2722.1,647.2" fill="#e4e6ea"/>
<polygon points="2701.7,673.2 2680.4,667.9 2688.6,640.1 2707.4,644.8" fill="#e6e8eb"/>
<polygon points="2685.2,669.3 2664.4,662.5 2674.6,635.4 2692.9,641.4" fill="#e9eaed"/>
<polygon points="2669.1,664.3 2648.8,656.0 2660.8,629.7 2678.7,636.9" fill="#ebecef"/>
<polygon points="2653.4,658.1 2633.7,648.5 2647.5,623.0 2664.9,631.5" fill="#eeeff1"/>
<polygon points="2638.1,650.9 2619.1,639.9 2634.7,615.4 2651.5,625.1" fill="#f0f1f3"/>
<polygon points="2623.4,642.6 2605.2,630.3 2622.5,607.0 2638.5,617.8" fill="#f2f3f5"/>
<polygon points="2609.3,633.3 2592.0,619.7 2610.9,597.7 2626.1,609.6" fill="#f4f4f6"/>
<polygon points="2595.9,623.0 2579.6,608.3 2599.9,587.7 2614.3,600.6" fill="#f5f5f7"/>
<polygon points="2583.2,611.8 2568.0,596.0 2589.7,576.9 2603.2,590.8" fill="#f5f5f7"/>
<polygon points="2571.4,599.8 2557.3,583.0 2580.3,565.4 2592.7,580.2" fill="#f4f4f6"/>
<polygon points="2560.4,587.0 2547.5,569.2 2571.7,553.3 2583.0,568.9" fill="#f2f2f4"/>
<polygon points="2550.3,573.4 2538.7,554.8 2563.9,540.6 2574.2,557.0" fill="#efeff0"/>
<polygon points="2541.2,559.2 2530.9,539.8 2557.1,527.4 2566.2,544.4" fill="#ebebeb"/>
<polygon points="2533.1,544.4 2524.2,524.3 2551.2,513.7 2559.0,531.4" fill="#e6e6e6"/>
<polygon points="2526.1,529.0 2518.6,508.4 2546.2,499.7 2552.9,517.9" fill="#e2e2e1"/>
<polygon points="2520.1,513.2 2514.1,492.1 2542.3,485.4 2547.6,503.9" fill="#dddddc"/>
<polygon points="2515.3,497.0 2510.7,475.5 2539.4,470.8 2543.4,489.7" fill="#d9d9d8"/>
<polygon points="2511.6,480.5 2508.6,458.8 2537.4,456.0 2540.1,475.2" fill="#d6d6d5"/>
<polygon points="2509.1,463.8 2507.6,441.9 2536.6,441.2 2537.9,460.5" fill="#d4d4d2"/>
<polygon points="2507.7,447.0 2507.7,425.0 2536.7,426.3 2536.7,445.7" fill="#d4d4d2"/>
<polygon points="2507.6,430.1 2509.1,408.2 2537.9,411.5 2536.6,430.8" fill="#d3d3d1"/>
<polygon points="2508.6,413.2 2511.6,391.5 2540.1,396.8 2537.4,416.0" fill="#d2d2ce"/>
<polygon points="2510.7,396.5 2515.3,375.0 2543.4,382.3 2539.4,401.2" fill="#d1d0cb"/>
<polygon points="2514.1,379.9 2520.1,358.8 2547.6,368.1 2542.3,386.6" fill="#cfcec7"/>
<polygon points="2518.6,363.6 2526.1,343.0 2552.9,354.1 2546.2,372.3" fill="#cdcbc2"/>
<polygon points="2524.2,347.7 2533.1,327.6 2559.0,340.6 2551.2,358.3" fill="#cbc9bd"/>
<polygon points="2530.9,332.2 2541.2,312.8 2566.2,327.6 2557.1,344.6" fill="#c9c6b8"/>
<polygon points="2538.7,317.2 2550.3,298.6 2574.2,315.0 2563.9,331.4" fill="#c7c4b3"/>
<polygon points="2547.5,302.8 2560.4,285.0 2583.0,303.1 2571.7,318.7" fill="#c5c2af"/>
<polygon points="2557.3,289.0 2571.4,272.2 2592.7,291.8 2580.3,306.6" fill="#c4c0ad"/>
<polygon points="2568.0,276.0 2583.2,260.2 2603.2,281.2 2589.7,295.1" fill="#c4c0ac"/>
<polygon points="2579.6,263.7 2595.9,249.0 2614.3,271.4 2599.9,284.3" fill="#c3bfab"/>
<polygon points="2592.0,252.3 2609.3,238.7 2626.1,262.4 2610.9,274.3" fill="#c1bda9"/>
<polygon points="2605.2,241.7 2623.4,229.4 2638.5,254.2 2622.5,265.0" fill="#bebaa7"/>
<polygon points="2619.1,232.1 2638.1,221.1 2651.5,246.9 2634.7,256.6" fill="#bab6a3"/>
<polygon points="2633.7,223.5 2653.4,213.9 2664.9,240.5 2647.5,249.0" fill="#b6b29f"/>
<polygon points="2648.8,216.0 2669.1,207.7 2678.7,235.1 2660.8,242.3" fill="#b1ad9b"/>
<polygon points="2664.4,209.5 2685.2,202.7 2692.9,230.6 2674.6,236.6" fill="#aca897"/>
<polygon points="2680.4,204.1 2701.7,198.8 2707.4,227.2 2688.6,231.9" fill="#a8a493"/>
<polygon points="2696.7,199.8 2718.3,196.0 2722.1,224.8 2703.0,228.1" fill="#a4a090"/>
<polygon points="2713.3,196.7 2735.1,194.4 2736.9,223.4 2717.6,225.4" fill="#a19d8d"/>
<polygon points="2730.1,194.8 2752.0,194.0 2751.7,223.0 2732.4,223.7" fill="#a09c8c"/>
<circle cx="2749.5" cy="436" r="241" fill="none" stroke="#6a6a64" stroke-width="2" opacity="0.6"/>
<circle cx="2749.5" cy="436" r="234" fill="none" stroke="#f0eee6" stroke-width="6" opacity="0.6"/>
<circle cx="2749.5" cy="436" r="228.5" fill="none" stroke="#6a6458" stroke-width="2" opacity="0.55"/>
<circle cx="2749.5" cy="436" r="223.5" fill="none" stroke="#f0eee6" stroke-width="5" opacity="0.55"/>
<circle cx="2749.5" cy="436" r="217.5" fill="none" stroke="#76746c" stroke-width="4.5" opacity="0.85"/>
<clipPath id="cFace"><circle cx="2749.5" cy="436" r="215"/></clipPath>
<g clip-path="url(#cFace)">
<rect x="2533.5" y="220.0" width="432.0" height="217.5" fill="#3555b5" />
<rect x="2533.5" y="437.5" width="432.0" height="216.0" fill="#8b5b49" />
<rect x="2533.5" y="435.5" width="432.0" height="3.2" fill="#aca8a8" />
</g>
<line x1="2767.3" y1="232.8" x2="2768.0" y2="224.8" stroke="#eef0f4" stroke-width="2.2" />
<line x1="2784.9" y1="235.1" x2="2786.3" y2="227.2" stroke="#eef0f4" stroke-width="2.2" />
<line x1="2798.9" y1="251.5" x2="2804.4" y2="231.2" stroke="#eef0f4" stroke-width="2.6" />
<line x1="2819.3" y1="244.3" x2="2822.0" y2="236.8" stroke="#eef0f4" stroke-width="2.2" />
<line x1="2835.7" y1="251.1" x2="2839.1" y2="243.9" stroke="#eef0f4" stroke-width="2.2" />
<line x1="2849.5" y1="262.8" x2="2855.5" y2="252.4" stroke="#eef0f4" stroke-width="2.6" />
<line x1="2866.5" y1="268.9" x2="2871.1" y2="262.3" stroke="#eef0f4" stroke-width="2.2" />
<line x1="2880.6" y1="279.7" x2="2885.8" y2="273.6" stroke="#eef0f4" stroke-width="2.2" />
<line x1="2884.6" y1="300.9" x2="2899.4" y2="286.1" stroke="#eef0f4" stroke-width="2.6" />
<line x1="2905.8" y1="304.9" x2="2911.9" y2="299.7" stroke="#eef0f4" stroke-width="2.2" />
<line x1="2916.6" y1="319.0" x2="2923.2" y2="314.4" stroke="#eef0f4" stroke-width="2.2" />
<line x1="2922.7" y1="336.0" x2="2933.1" y2="330.0" stroke="#eef0f4" stroke-width="2.6" />
<line x1="2934.4" y1="349.8" x2="2941.6" y2="346.4" stroke="#eef0f4" stroke-width="2.2" />
<line x1="2941.2" y1="366.2" x2="2948.7" y2="363.5" stroke="#eef0f4" stroke-width="2.2" />
<line x1="2934.0" y1="386.6" x2="2954.3" y2="381.1" stroke="#eef0f4" stroke-width="2.6" />
<line x1="2950.4" y1="400.6" x2="2958.3" y2="399.2" stroke="#eef0f4" stroke-width="2.2" />
<line x1="2952.7" y1="418.2" x2="2960.7" y2="417.5" stroke="#eef0f4" stroke-width="2.2" />
<line x1="2949.5" y1="436.0" x2="2961.5" y2="436.0" stroke="#eef0f4" stroke-width="2.6" />
<line x1="2952.7" y1="453.8" x2="2960.7" y2="454.5" stroke="#eef0f4" stroke-width="2.2" />
<line x1="2950.4" y1="471.4" x2="2958.3" y2="472.8" stroke="#eef0f4" stroke-width="2.2" />
<line x1="2934.0" y1="485.4" x2="2954.3" y2="490.9" stroke="#eef0f4" stroke-width="2.6" />
<line x1="2941.2" y1="505.8" x2="2948.7" y2="508.5" stroke="#eef0f4" stroke-width="2.2" />
<line x1="2934.4" y1="522.2" x2="2941.6" y2="525.6" stroke="#eef0f4" stroke-width="2.2" />
<line x1="2922.7" y1="536.0" x2="2933.1" y2="542.0" stroke="#eef0f4" stroke-width="2.6" />
<line x1="2916.6" y1="553.0" x2="2923.2" y2="557.6" stroke="#eef0f4" stroke-width="2.2" />
<line x1="2905.8" y1="567.1" x2="2911.9" y2="572.3" stroke="#eef0f4" stroke-width="2.2" />
<line x1="2884.6" y1="571.1" x2="2899.4" y2="585.9" stroke="#eef0f4" stroke-width="2.6" />
<line x1="2880.6" y1="592.3" x2="2885.8" y2="598.4" stroke="#eef0f4" stroke-width="2.2" />
<line x1="2866.5" y1="603.1" x2="2871.1" y2="609.7" stroke="#eef0f4" stroke-width="2.2" />
<line x1="2849.5" y1="609.2" x2="2855.5" y2="619.6" stroke="#eef0f4" stroke-width="2.6" />
<line x1="2835.7" y1="620.9" x2="2839.1" y2="628.1" stroke="#eef0f4" stroke-width="2.2" />
<line x1="2819.3" y1="627.7" x2="2822.0" y2="635.2" stroke="#eef0f4" stroke-width="2.2" />
<line x1="2798.9" y1="620.5" x2="2804.4" y2="640.8" stroke="#eef0f4" stroke-width="2.6" />
<line x1="2784.9" y1="636.9" x2="2786.3" y2="644.8" stroke="#eef0f4" stroke-width="2.2" />
<line x1="2767.3" y1="639.2" x2="2768.0" y2="647.2" stroke="#eef0f4" stroke-width="2.2" />
<line x1="2731.7" y1="639.2" x2="2731.0" y2="647.2" stroke="#eef0f4" stroke-width="2.2" />
<line x1="2714.1" y1="636.9" x2="2712.7" y2="644.8" stroke="#eef0f4" stroke-width="2.2" />
<line x1="2700.1" y1="620.5" x2="2694.6" y2="640.8" stroke="#eef0f4" stroke-width="2.6" />
<line x1="2679.7" y1="627.7" x2="2677.0" y2="635.2" stroke="#eef0f4" stroke-width="2.2" />
<line x1="2663.3" y1="620.9" x2="2659.9" y2="628.1" stroke="#eef0f4" stroke-width="2.2" />
<line x1="2649.5" y1="609.2" x2="2643.5" y2="619.6" stroke="#eef0f4" stroke-width="2.6" />
<line x1="2632.5" y1="603.1" x2="2627.9" y2="609.7" stroke="#eef0f4" stroke-width="2.2" />
<line x1="2618.4" y1="592.3" x2="2613.2" y2="598.4" stroke="#eef0f4" stroke-width="2.2" />
<line x1="2614.4" y1="571.1" x2="2599.6" y2="585.9" stroke="#eef0f4" stroke-width="2.6" />
<line x1="2593.2" y1="567.1" x2="2587.1" y2="572.3" stroke="#eef0f4" stroke-width="2.2" />
<line x1="2582.4" y1="553.0" x2="2575.8" y2="557.6" stroke="#eef0f4" stroke-width="2.2" />
<line x1="2576.3" y1="536.0" x2="2565.9" y2="542.0" stroke="#eef0f4" stroke-width="2.6" />
<line x1="2564.6" y1="522.2" x2="2557.4" y2="525.6" stroke="#eef0f4" stroke-width="2.2" />
<line x1="2557.8" y1="505.8" x2="2550.3" y2="508.5" stroke="#eef0f4" stroke-width="2.2" />
<line x1="2565.0" y1="485.4" x2="2544.7" y2="490.9" stroke="#eef0f4" stroke-width="2.6" />
<line x1="2548.6" y1="471.4" x2="2540.7" y2="472.8" stroke="#eef0f4" stroke-width="2.2" />
<line x1="2546.3" y1="453.8" x2="2538.3" y2="454.5" stroke="#eef0f4" stroke-width="2.2" />
<line x1="2549.5" y1="436.0" x2="2537.5" y2="436.0" stroke="#eef0f4" stroke-width="2.6" />
<line x1="2546.3" y1="418.2" x2="2538.3" y2="417.5" stroke="#eef0f4" stroke-width="2.2" />
<line x1="2548.6" y1="400.6" x2="2540.7" y2="399.2" stroke="#eef0f4" stroke-width="2.2" />
<line x1="2565.0" y1="386.6" x2="2544.7" y2="381.1" stroke="#eef0f4" stroke-width="2.6" />
<line x1="2557.8" y1="366.2" x2="2550.3" y2="363.5" stroke="#eef0f4" stroke-width="2.2" />
<line x1="2564.6" y1="349.8" x2="2557.4" y2="346.4" stroke="#eef0f4" stroke-width="2.2" />
<line x1="2576.3" y1="336.0" x2="2565.9" y2="330.0" stroke="#eef0f4" stroke-width="2.6" />
<line x1="2582.4" y1="319.0" x2="2575.8" y2="314.4" stroke="#eef0f4" stroke-width="2.2" />
<line x1="2593.2" y1="304.9" x2="2587.1" y2="299.7" stroke="#eef0f4" stroke-width="2.2" />
<line x1="2614.4" y1="300.9" x2="2599.6" y2="286.1" stroke="#eef0f4" stroke-width="2.6" />
<line x1="2618.4" y1="279.7" x2="2613.2" y2="273.6" stroke="#eef0f4" stroke-width="2.2" />
<line x1="2632.5" y1="268.9" x2="2627.9" y2="262.3" stroke="#eef0f4" stroke-width="2.2" />
<line x1="2649.5" y1="262.8" x2="2643.5" y2="252.4" stroke="#eef0f4" stroke-width="2.6" />
<line x1="2663.3" y1="251.1" x2="2659.9" y2="243.9" stroke="#eef0f4" stroke-width="2.2" />
<line x1="2679.7" y1="244.3" x2="2677.0" y2="236.8" stroke="#eef0f4" stroke-width="2.2" />
<line x1="2700.1" y1="251.5" x2="2694.6" y2="231.2" stroke="#eef0f4" stroke-width="2.6" />
<line x1="2714.1" y1="235.1" x2="2712.7" y2="227.2" stroke="#eef0f4" stroke-width="2.2" />
<line x1="2731.7" y1="232.8" x2="2731.0" y2="224.8" stroke="#eef0f4" stroke-width="2.2" />
<g transform="translate(2842.0,275.8) rotate(30)">
<text x="0.0" y="6.5" font-size="18" fill="#f4f4f8" font-family='"DejaVu Sans", "Liberation Sans", sans-serif' font-weight="bold" text-anchor="middle" >30</text>
</g>
<g transform="translate(2909.7,343.5) rotate(60)">
<text x="0.0" y="6.5" font-size="18" fill="#f4f4f8" font-family='"DejaVu Sans", "Liberation Sans", sans-serif' font-weight="bold" text-anchor="middle" >60</text>
</g>
<g transform="translate(2937.5,436.0) rotate(90)">
<text x="0.0" y="6.5" font-size="18" fill="#f4f4f8" font-family='"DejaVu Sans", "Liberation Sans", sans-serif' font-weight="bold" text-anchor="middle" >90</text>
</g>
<g transform="translate(2909.7,528.5) rotate(120)">
<text x="0.0" y="6.5" font-size="18" fill="#f4f4f8" font-family='"DejaVu Sans", "Liberation Sans", sans-serif' font-weight="bold" text-anchor="middle" >120</text>
</g>
<g transform="translate(2842.0,596.2) rotate(150)">
<text x="0.0" y="6.5" font-size="18" fill="#f4f4f8" font-family='"DejaVu Sans", "Liberation Sans", sans-serif' font-weight="bold" text-anchor="middle" >150</text>
</g>
<g transform="translate(2749.5,621.0) rotate(180)">
<text x="0.0" y="6.5" font-size="18" fill="#f4f4f8" font-family='"DejaVu Sans", "Liberation Sans", sans-serif' font-weight="bold" text-anchor="middle" >180</text>
</g>
<g transform="translate(2657.0,275.8) rotate(-30)">
<text x="0.0" y="6.5" font-size="18" fill="#f4f4f8" font-family='"DejaVu Sans", "Liberation Sans", sans-serif' font-weight="bold" text-anchor="middle" >-30</text>
</g>
<g transform="translate(2589.3,343.5) rotate(-60)">
<text x="0.0" y="6.5" font-size="18" fill="#f4f4f8" font-family='"DejaVu Sans", "Liberation Sans", sans-serif' font-weight="bold" text-anchor="middle" >-60</text>
</g>
<g transform="translate(2561.5,436.0) rotate(-90)">
<text x="0.0" y="6.5" font-size="18" fill="#f4f4f8" font-family='"DejaVu Sans", "Liberation Sans", sans-serif' font-weight="bold" text-anchor="middle" >-90</text>
</g>
<g transform="translate(2589.3,528.5) rotate(-120)">
<text x="0.0" y="6.5" font-size="18" fill="#f4f4f8" font-family='"DejaVu Sans", "Liberation Sans", sans-serif' font-weight="bold" text-anchor="middle" >-120</text>
</g>
<g transform="translate(2657.0,596.2) rotate(-150)">
<text x="0.0" y="6.5" font-size="18" fill="#f4f4f8" font-family='"DejaVu Sans", "Liberation Sans", sans-serif' font-weight="bold" text-anchor="middle" >-150</text>
</g>
<polygon points="2741.5,208 2757.5,208 2749.5,222" fill="#1a1410"/>
<line x1="2749.5" y1="224.0" x2="2749.5" y2="250.0" stroke="#f4f4f8" stroke-width="2.6" />
<line x1="2745.0" y1="229.0" x2="2754.0" y2="229.0" stroke="#f4f4f8" stroke-width="2" />
<line x1="2745.0" y1="236.0" x2="2754.0" y2="236.0" stroke="#f4f4f8" stroke-width="2" />
<line x1="2745.0" y1="243.0" x2="2754.0" y2="243.0" stroke="#f4f4f8" stroke-width="2" />
<text x="2749.5" y="259.0" font-size="19" fill="#f4f4f8" font-family='"DejaVu Sans", "Liberation Sans", sans-serif' font-weight="bold" text-anchor="middle" >0</text>
<line x1="2749.5" y1="648.0" x2="2749.5" y2="634.0" stroke="#f4f4f8" stroke-width="2.6" />
<line x1="2745.5" y1="641.0" x2="2753.5" y2="641.0" stroke="#f4f4f8" stroke-width="2" />
<line x1="2745.0" y1="275.6" x2="2754.0" y2="275.6" stroke="#eef0f4" stroke-width="2.8" />
<line x1="2745.0" y1="302.4" x2="2754.0" y2="302.4" stroke="#eef0f4" stroke-width="2.8" />
<line x1="2741.5" y1="331.0" x2="2757.5" y2="331.0" stroke="#eef0f4" stroke-width="2.8" />
<line x1="2745.0" y1="364.7" x2="2754.0" y2="364.7" stroke="#eef0f4" stroke-width="2.8" />
<line x1="2745.5" y1="401.3" x2="2753.5" y2="401.3" stroke="#eef0f4" stroke-width="2.8" />
<line x1="2745.0" y1="473.8" x2="2754.0" y2="473.8" stroke="#eef0f4" stroke-width="2.8" />
<line x1="2745.0" y1="510.0" x2="2754.0" y2="510.0" stroke="#eef0f4" stroke-width="2.8" />
<line x1="2741.5" y1="543.3" x2="2757.5" y2="543.3" stroke="#eef0f4" stroke-width="2.8" />
<line x1="2745.0" y1="574.0" x2="2754.0" y2="574.0" stroke="#eef0f4" stroke-width="2.8" />
<line x1="2745.0" y1="601.7" x2="2754.0" y2="601.7" stroke="#eef0f4" stroke-width="2.8" />
<text x="2766.0" y="258.0" font-size="20" fill="#7c8cb0" font-family='"DejaVu Sans", "Liberation Sans", sans-serif' font-weight="bold" text-anchor="start" textLength="27.0" lengthAdjust="spacingAndGlyphs" >60</text>
<text x="2766.0" y="339.0" font-size="20" fill="#d4e41c" font-family='"DejaVu Sans", "Liberation Sans", sans-serif' font-weight="bold" text-anchor="start" textLength="27.0" lengthAdjust="spacingAndGlyphs" >30</text>
<text x="2774.0" y="444.0" font-size="20" fill="#c8dc20" font-family='"DejaVu Sans", "Liberation Sans", sans-serif' font-weight="bold" text-anchor="start" >0</text>
<text x="2766.0" y="549.0" font-size="20" fill="#e0d820" font-family='"DejaVu Sans", "Liberation Sans", sans-serif' font-weight="bold" text-anchor="start" textLength="34.0" lengthAdjust="spacingAndGlyphs" >-30</text>
<text x="2777.0" y="625.5" font-size="18" fill="#9a8a48" font-family='"DejaVu Sans", "Liberation Sans", sans-serif' font-weight="bold" text-anchor="start" textLength="23.0" lengthAdjust="spacingAndGlyphs" >60</text>
<text x="2602.0" y="474.5" font-size="18" fill="#c468d8" font-family='"DejaVu Sans", "Liberation Sans", sans-serif' font-weight="bold" text-anchor="middle" >330</text>
<text x="2694.0" y="483.5" font-size="18" fill="#c468d8" font-family='"DejaVu Sans", "Liberation Sans", sans-serif' font-weight="bold" text-anchor="middle" >0</text>
<text x="2805.0" y="474.5" font-size="18" fill="#c468d8" font-family='"DejaVu Sans", "Liberation Sans", sans-serif' font-weight="bold" text-anchor="middle" >30</text>
<text x="2898.5" y="474.5" font-size="18" fill="#c468d8" font-family='"DejaVu Sans", "Liberation Sans", sans-serif' font-weight="bold" text-anchor="middle" >60</text>
<line x1="2694.0" y1="417.5" x2="2694.0" y2="459.0" stroke="#f4f4f8" stroke-width="2.6" />
<line x1="2600.0" y1="427.0" x2="2600.0" y2="445.0" stroke="#e8e8f0" stroke-width="2.2" />
<line x1="2801.8" y1="427.0" x2="2801.8" y2="445.0" stroke="#e8e8f0" stroke-width="2.2" />
<line x1="2896.4" y1="428.0" x2="2896.4" y2="444.0" stroke="#e8e8f0" stroke-width="2.2" />
<line x1="2565.0" y1="430.0" x2="2565.0" y2="442.0" stroke="#e8e8f0" stroke-width="2.2" />
<line x1="2940.0" y1="430.0" x2="2940.0" y2="442.0" stroke="#e8e8f0" stroke-width="2.2" />
<line x1="2632.0" y1="432.0" x2="2632.0" y2="440.0" stroke="#d0d0dc" stroke-width="2" />
<line x1="2657.7" y1="432.0" x2="2657.7" y2="440.0" stroke="#d0d0dc" stroke-width="2" />
<line x1="2836.7" y1="432.0" x2="2836.7" y2="440.0" stroke="#d0d0dc" stroke-width="2" />
<line x1="2866.0" y1="432.0" x2="2866.0" y2="440.0" stroke="#d0d0dc" stroke-width="2" />
<line x1="2540.0" y1="437.0" x2="2575.0" y2="437.0" stroke="#f4f4f8" stroke-width="3" />
<line x1="2924.0" y1="437.0" x2="2959.0" y2="437.0" stroke="#f4f4f8" stroke-width="3" />
<line x1="2545.0" y1="427.0" x2="2545.0" y2="447.0" stroke="#f4f4f8" stroke-width="2.4" />
<line x1="2954.0" y1="427.0" x2="2954.0" y2="447.0" stroke="#f4f4f8" stroke-width="2.4" />
<path d="M2721.5,437.5 Q2724,456 2734,456.5 H2762 Q2771,456 2773,437.5" fill="none" stroke="#b8b4b0" stroke-width="2.6"/>
<polygon points="2747.5,420.5 2766.5,438 2730,438" fill="#d0e028"/>
<polygon points="2738,440 2760,440 2752,450" fill="#f4f4f0"/>
<line x1="2730.0" y1="438.0" x2="2767.0" y2="438.0" stroke="#f0f0e0" stroke-width="2" />
<rect x="2456.0" y="691.0" width="584.0" height="87.0" fill="url(#cStrip)" />
<text x="2558.5" y="717.3" font-size="23" fill="#eef0f8" font-family='"DejaVu Sans", "Liberation Sans", sans-serif' font-weight="bold" text-anchor="middle" textLength="52.0" lengthAdjust="spacingAndGlyphs" >Roll</text>
<text x="2559.0" y="744.5" font-size="23" fill="#eef0f8" font-family='"DejaVu Sans", "Liberation Sans", sans-serif' font-weight="bold" text-anchor="middle" textLength="122.7" lengthAdjust="spacingAndGlyphs" >-0.1845°</text>
<text x="2560.3" y="772.7" font-size="23" fill="#eef0f8" font-family='"DejaVu Sans", "Liberation Sans", sans-serif' font-weight="bold" text-anchor="middle" textLength="79.4" lengthAdjust="spacingAndGlyphs" >±0.25</text>
<text x="2750.0" y="717.3" font-size="23" fill="#eef0f8" font-family='"DejaVu Sans", "Liberation Sans", sans-serif' font-weight="bold" text-anchor="middle" textLength="68.6" lengthAdjust="spacingAndGlyphs" >Pitch</text>
<text x="2749.2" y="744.5" font-size="23" fill="#eef0f8" font-family='"DejaVu Sans", "Liberation Sans", sans-serif' font-weight="bold" text-anchor="middle" textLength="108.3" lengthAdjust="spacingAndGlyphs" >0.6074°</text>
<text x="2750.5" y="772.7" font-size="23" fill="#eef0f8" font-family='"DejaVu Sans", "Liberation Sans", sans-serif' font-weight="bold" text-anchor="middle" textLength="79.4" lengthAdjust="spacingAndGlyphs" >±0.25</text>
<text x="2940.6" y="717.3" font-size="23" fill="#eef0f8" font-family='"DejaVu Sans", "Liberation Sans", sans-serif' font-weight="bold" text-anchor="middle" textLength="110.7" lengthAdjust="spacingAndGlyphs" >Azimuth</text>
<text x="2939.4" y="744.5" font-size="23" fill="#eef0f8" font-family='"DejaVu Sans", "Liberation Sans", sans-serif' font-weight="bold" text-anchor="middle" textLength="108.3" lengthAdjust="spacingAndGlyphs" >15.030°</text>
<text x="2941.2" y="772.7" font-size="23" fill="#eef0f8" font-family='"DejaVu Sans", "Liberation Sans", sans-serif' font-weight="bold" text-anchor="middle" textLength="80.6" lengthAdjust="spacingAndGlyphs" >±1.00</text>
<rect x="3053" y="198" width="586" height="478" rx="12" fill="#2f4879"/>
<line x1="3217.0" y1="212.0" x2="3217.0" y2="666.0" stroke="#7288b4" stroke-width="1.6" />
<line x1="3064.0" y1="330.0" x2="3628.0" y2="330.0" stroke="#7288b4" stroke-width="1.8" />
<line x1="3064.0" y1="498.8" x2="3628.0" y2="498.8" stroke="#7288b4" stroke-width="1.8" />
<line x1="3064.0" y1="625.0" x2="3628.0" y2="625.0" stroke="#7288b4" stroke-width="1.8" />
<text x="3067.0" y="235.0" font-size="25" fill="#f2f4fa" font-family='"DejaVu Sans", "Liberation Sans", sans-serif' font-weight="bold" text-anchor="start" textLength="104.0" lengthAdjust="spacingAndGlyphs" >Latitude</text>
<text x="3466.0" y="235.0" font-size="25" fill="#f2f4fa" font-family='"DejaVu Sans", "Liberation Sans", sans-serif' font-weight="bold" text-anchor="end" textLength="216.0" lengthAdjust="spacingAndGlyphs" >39.976963774° ±</text>
<text x="3623.0" y="235.0" font-size="25" fill="#f2f4fa" font-family='"DejaVu Sans", "Liberation Sans", sans-serif' font-weight="bold" text-anchor="end" textLength="96.0" lengthAdjust="spacingAndGlyphs" >1.689m</text>
<text x="3067.0" y="272.4" font-size="25" fill="#f2f4fa" font-family='"DejaVu Sans", "Liberation Sans", sans-serif' font-weight="bold" text-anchor="start" textLength="125.0" lengthAdjust="spacingAndGlyphs" >Longitude</text>
<text x="3466.0" y="272.4" font-size="25" fill="#f2f4fa" font-family='"DejaVu Sans", "Liberation Sans", sans-serif' font-weight="bold" text-anchor="end" textLength="231.0" lengthAdjust="spacingAndGlyphs" >116.309775263° ±</text>
<text x="3623.0" y="272.4" font-size="25" fill="#f2f4fa" font-family='"DejaVu Sans", "Liberation Sans", sans-serif' font-weight="bold" text-anchor="end" textLength="96.0" lengthAdjust="spacingAndGlyphs" >1.465m</text>
<text x="3067.0" y="310.8" font-size="25" fill="#f2f4fa" font-family='"DejaVu Sans", "Liberation Sans", sans-serif' font-weight="bold" text-anchor="start" textLength="131.0" lengthAdjust="spacingAndGlyphs" >Hgt. (MSL)</text>
<text x="3466.0" y="310.8" font-size="25" fill="#f2f4fa" font-family='"DejaVu Sans", "Liberation Sans", sans-serif' font-weight="bold" text-anchor="end" textLength="147.0" lengthAdjust="spacingAndGlyphs" >127.519m ±</text>
<text x="3623.0" y="310.8" font-size="25" fill="#f2f4fa" font-family='"DejaVu Sans", "Liberation Sans", sans-serif' font-weight="bold" text-anchor="end" textLength="96.0" lengthAdjust="spacingAndGlyphs" >3.137m</text>
<text x="3067.0" y="364.0" font-size="25" fill="#f2f4fa" font-family='"DejaVu Sans", "Liberation Sans", sans-serif' font-weight="bold" text-anchor="start" textLength="103.0" lengthAdjust="spacingAndGlyphs" >Velocity</text>
<text x="3466.0" y="364.0" font-size="25" fill="#f2f4fa" font-family='"DejaVu Sans", "Liberation Sans", sans-serif' font-weight="bold" text-anchor="end" textLength="159.0" lengthAdjust="spacingAndGlyphs" >0.0029m/s ±</text>
<text x="3623.0" y="364.0" font-size="25" fill="#f2f4fa" font-family='"DejaVu Sans", "Liberation Sans", sans-serif' font-weight="bold" text-anchor="end" textLength="118.0" lengthAdjust="spacingAndGlyphs" >0.028m/s</text>
<text x="3082.0" y="402.3" font-size="25" fill="#f2f4fa" font-family='"DejaVu Sans", "Liberation Sans", sans-serif' font-weight="bold" text-anchor="start" textLength="70.0" lengthAdjust="spacingAndGlyphs" >North</text>
<text x="3466.0" y="402.3" font-size="25" fill="#f2f4fa" font-family='"DejaVu Sans", "Liberation Sans", sans-serif' font-weight="bold" text-anchor="end" textLength="159.0" lengthAdjust="spacingAndGlyphs" >0.0028m/s ±</text>
<text x="3623.0" y="402.3" font-size="25" fill="#f2f4fa" font-family='"DejaVu Sans", "Liberation Sans", sans-serif' font-weight="bold" text-anchor="end" textLength="118.0" lengthAdjust="spacingAndGlyphs" >0.017m/s</text>
<text x="3082.0" y="439.6" font-size="25" fill="#f2f4fa" font-family='"DejaVu Sans", "Liberation Sans", sans-serif' font-weight="bold" text-anchor="start" textLength="53.0" lengthAdjust="spacingAndGlyphs" >East</text>
<text x="3466.0" y="439.6" font-size="25" fill="#f2f4fa" font-family='"DejaVu Sans", "Liberation Sans", sans-serif' font-weight="bold" text-anchor="end" textLength="170.0" lengthAdjust="spacingAndGlyphs" >-0.0002m/s ±</text>
<text x="3623.0" y="439.6" font-size="25" fill="#f2f4fa" font-family='"DejaVu Sans", "Liberation Sans", sans-serif' font-weight="bold" text-anchor="end" textLength="118.0" lengthAdjust="spacingAndGlyphs" >0.017m/s</text>
<text x="3082.0" y="478.5" font-size="25" fill="#f2f4fa" font-family='"DejaVu Sans", "Liberation Sans", sans-serif' font-weight="bold" text-anchor="start" textLength="32.0" lengthAdjust="spacingAndGlyphs" >Up</text>
<text x="3466.0" y="478.5" font-size="25" fill="#f2f4fa" font-family='"DejaVu Sans", "Liberation Sans", sans-serif' font-weight="bold" text-anchor="end" textLength="170.0" lengthAdjust="spacingAndGlyphs" >-0.0006m/s ±</text>
<text x="3623.0" y="478.5" font-size="25" fill="#f2f4fa" font-family='"DejaVu Sans", "Liberation Sans", sans-serif' font-weight="bold" text-anchor="end" textLength="118.0" lengthAdjust="spacingAndGlyphs" >0.015m/s</text>
<text x="3067.0" y="532.7" font-size="25" fill="#f2f4fa" font-family='"DejaVu Sans", "Liberation Sans", sans-serif' font-weight="bold" text-anchor="start" textLength="99.0" lengthAdjust="spacingAndGlyphs" >X Offset</text>
<text x="3466.0" y="532.7" font-size="25" fill="#f2f4fa" font-family='"DejaVu Sans", "Liberation Sans", sans-serif' font-weight="bold" text-anchor="end" textLength="96.0" lengthAdjust="spacingAndGlyphs" >0.000m</text>
<text x="3067.0" y="570.0" font-size="25" fill="#f2f4fa" font-family='"DejaVu Sans", "Liberation Sans", sans-serif' font-weight="bold" text-anchor="start" textLength="99.0" lengthAdjust="spacingAndGlyphs" >Y Offset</text>
<text x="3466.0" y="570.0" font-size="25" fill="#f2f4fa" font-family='"DejaVu Sans", "Liberation Sans", sans-serif' font-weight="bold" text-anchor="end" textLength="96.0" lengthAdjust="spacingAndGlyphs" >0.000m</text>
<text x="3067.0" y="607.0" font-size="25" fill="#f2f4fa" font-family='"DejaVu Sans", "Liberation Sans", sans-serif' font-weight="bold" text-anchor="start" textLength="99.0" lengthAdjust="spacingAndGlyphs" >Z Offset</text>
<text x="3466.0" y="607.0" font-size="25" fill="#f2f4fa" font-family='"DejaVu Sans", "Liberation Sans", sans-serif' font-weight="bold" text-anchor="end" textLength="96.0" lengthAdjust="spacingAndGlyphs" >0.000m</text>
<rect x="3061" y="630.7" width="150.5" height="42" fill="none" stroke="#c8d4e8" stroke-width="1.8"/>
<text x="3066.0" y="662.0" font-size="25" fill="#f2f4fa" font-family='"DejaVu Sans", "Liberation Sans", sans-serif' font-weight="bold" text-anchor="start" textLength="62.0" lengthAdjust="spacingAndGlyphs" >ZUPT</text>
<text x="3435.0" y="662.0" font-size="25" fill="#f2f4fa" font-family='"DejaVu Sans", "Liberation Sans", sans-serif' font-weight="bold" text-anchor="middle" textLength="58.0" lengthAdjust="spacingAndGlyphs" >On 1</text>
<rect x="3053.0" y="690.0" width="586.0" height="88.0" fill="url(#cStrip)" />
<text x="3087.0" y="714.5" font-size="21" fill="#eef0f8" font-family='"DejaVu Sans", "Liberation Sans", sans-serif' font-weight="bold" text-anchor="start" textLength="176.0" lengthAdjust="spacingAndGlyphs" >IMU_KVH_COTS</text>
<text x="3087.0" y="744.5" font-size="21" fill="#eef0f8" font-family='"DejaVu Sans", "Liberation Sans", sans-serif' font-weight="bold" text-anchor="start" textLength="417.0" lengthAdjust="spacingAndGlyphs" >INS_SOLUTION_GOOD (Ready to use)</text>
<text x="3087.0" y="774.0" font-size="21" fill="#eef0f8" font-family='"DejaVu Sans", "Liberation Sans", sans-serif' font-weight="bold" text-anchor="start" textLength="360.0" lengthAdjust="spacingAndGlyphs" >Mon 22/02/2010 18:15:04 Local</text>
</g>
<text x="592.5" y="1030" font-size="86" font-family='"Liberation Serif", serif' fill="#000" textLength="96" lengthAdjust="spacingAndGlyphs">(<tspan font-weight="bold">a</tspan>)</text>
<text x="1814.5" y="1030" font-size="86" font-family='"Liberation Serif", serif' fill="#000" textLength="106" lengthAdjust="spacingAndGlyphs">(<tspan font-weight="bold">b</tspan>)</text>
<text x="3047" y="1030" font-size="86" font-family='"Liberation Serif", serif' fill="#000" textLength="91.5" lengthAdjust="spacingAndGlyphs">(<tspan font-weight="bold">c</tspan>)</text>
</svg></body></html>
